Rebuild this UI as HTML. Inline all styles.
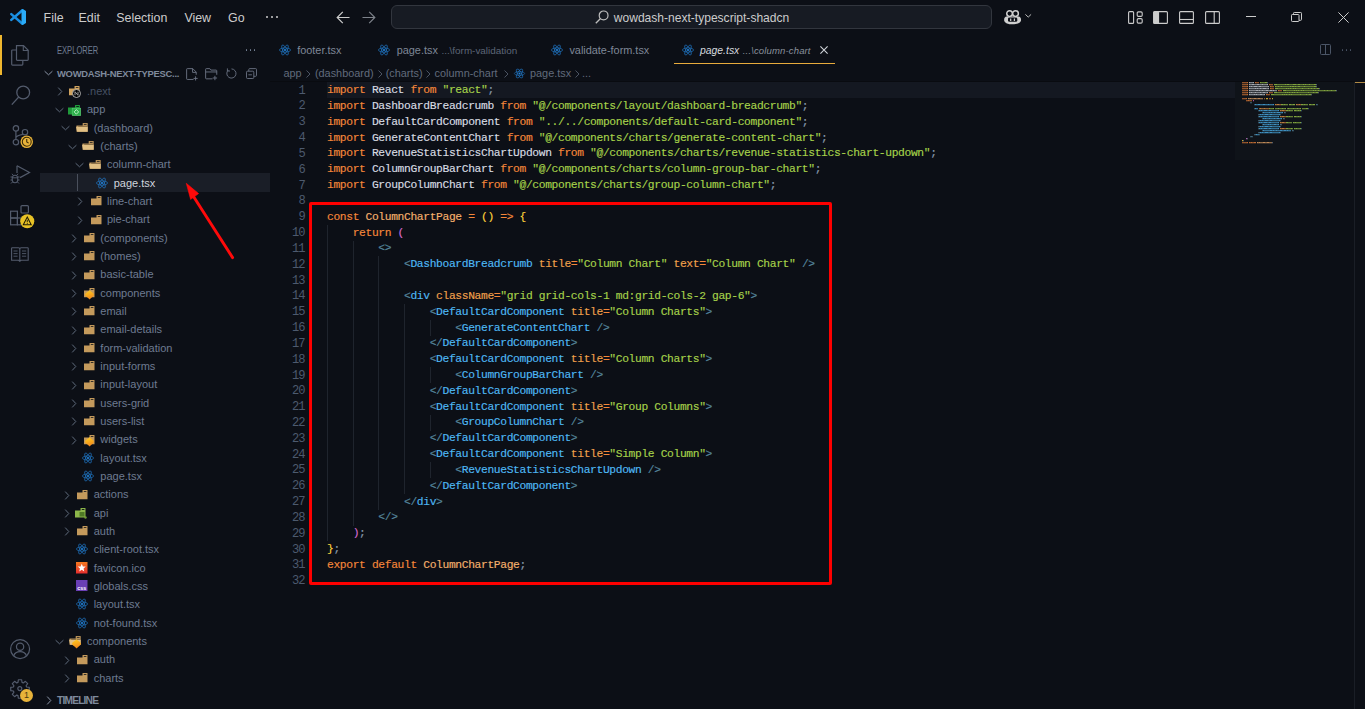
<!DOCTYPE html>
<html><head><meta charset="utf-8"><style>
*{box-sizing:border-box;margin:0;padding:0}
html,body{width:1365px;height:709px;overflow:hidden;background:#0c0f16;font-family:"Liberation Sans",sans-serif}
.a{position:absolute}
svg.a{overflow:visible}
.menu{position:absolute;top:11px;font-size:12.4px;color:#cccccc;line-height:14px}
.tx{font-size:11px;line-height:18.333px;white-space:pre}
.tab{position:absolute;top:43px;font-size:10.9px;color:#7f8796;line-height:14px;white-space:pre}
.crumb{position:absolute;top:66px;font-size:10.9px;color:#6b7588;line-height:14px;white-space:pre}
.code{left:327.0px;top:83.10000000000001px;font-family:"Liberation Mono",monospace;font-size:11.3px;letter-spacing:-0.363px;-webkit-text-stroke:0.15px;line-height:15.8333px;white-space:pre;color:#c9d1d9}
.ln{left:280px;width:24.8px;top:83.60000000000001px;font-family:"Liberation Mono",monospace;font-size:12.1px;letter-spacing:-0.843px;line-height:15.8333px;white-space:pre;color:#4d5a6e;text-align:right}
</style></head><body>
<svg class="a" style="left:9.9px;top:9px" width="16" height="16" viewBox="0 0 16 16"><path d="M12.4 1.2L1.3 10.9" stroke="#1c93e6" stroke-width="2.5" stroke-linecap="round"/><path d="M1.3 5.1L12.4 14.8" stroke="#1a8ddf" stroke-width="2.5" stroke-linecap="round"/><path d="M11.5 0.9L12.7 0.05L16 1.9V14.1L12.7 15.95L11.5 15.1Z" fill="#2aabf7"/></svg>
<div class="menu" style="left:43.6px">File</div>
<div class="menu" style="left:78.5px">Edit</div>
<div class="menu" style="left:116.3px">Selection</div>
<div class="menu" style="left:184.4px">View</div>
<div class="menu" style="left:228px">Go</div>
<div class="a" style="left:265.50px;top:16px;width:2.2px;height:2.2px;border-radius:50%;background:#cccccc"></div>
<div class="a" style="left:270.90px;top:16px;width:2.2px;height:2.2px;border-radius:50%;background:#cccccc"></div>
<div class="a" style="left:276.30px;top:16px;width:2.2px;height:2.2px;border-radius:50%;background:#cccccc"></div>
<svg class="a" style="left:335.5px;top:10.5px" width="14" height="13" viewBox="0 0 14 13"><path d="M13.5 6.5H1.2M6.8 0.8L1.2 6.5L6.8 12.2" fill="none" stroke="#cccccc" stroke-width="1.2"/></svg>
<svg class="a" style="left:361.8px;top:10.5px" width="14" height="13" viewBox="0 0 14 13"><path d="M0.5 6.5H12.8M7.2 0.8L12.8 6.5L7.2 12.2" fill="none" stroke="#7d828a" stroke-width="1.2"/></svg>
<div class="a" style="left:390.5px;top:5px;width:601.5px;height:24px;border:1px solid #32363e;border-radius:6px;background:#171b23"></div>
<svg class="a" style="left:595px;top:10px" width="14" height="14" viewBox="0 0 14 14"><circle cx="8.6" cy="5.4" r="4.4" fill="none" stroke="#bdbdbd" stroke-width="1.2"/><path d="M5.5 8.5L0.8 13.2" stroke="#bdbdbd" stroke-width="1.3"/></svg>
<div class="a" style="left:613.8px;top:11.4px;font-size:12.05px;color:#cccccc;line-height:14px;white-space:pre">wowdash-next-typescript-shadcn</div>
<svg class="a" style="left:1004px;top:9.7px" width="17.2" height="14.4" viewBox="0 0 17.2 14.4"><path d="M2.2 6.4C0.6 7 0 8.4 0.2 10.2C0.6 13.2 4 14.3 8.6 14.3C13.2 14.3 16.6 13.2 17 10.2C17.2 8.4 16.6 7 15 6.4Z" fill="#cfcfcf"/><rect x="4" y="7.4" width="9.3" height="4.4" rx="1.4" fill="#0c0f16"/><rect x="6.1" y="8.5" width="1.2" height="2.5" fill="#cfcfcf"/><rect x="9.8" y="8.5" width="1.2" height="2.5" fill="#cfcfcf"/><circle cx="5.6" cy="3.6" r="2.85" fill="#0c0f16" stroke="#cfcfcf" stroke-width="1.5"/><circle cx="11.5" cy="3.6" r="2.85" fill="#0c0f16" stroke="#cfcfcf" stroke-width="1.5"/></svg>
<svg class="a" style="left:1024.5px;top:14.4px" width="6.5" height="3.6" viewBox="0 0 6.5 3.6"><path d="M0.4 0.4L3.25 3.1L6.1 0.4" fill="none" stroke="#bbbbbb" stroke-width="1"/></svg>
<svg class="a" style="left:1128px;top:10.8px" width="15" height="13" viewBox="0 0 15 13"><rect x="0.6" y="0.6" width="5" height="11.8" rx="1" fill="none" stroke="#cccccc" stroke-width="1.1"/><rect x="9.2" y="0.9" width="5" height="4.5" rx="1.2" fill="none" stroke="#cccccc" stroke-width="1.1"/><rect x="9.2" y="7.6" width="5" height="4.5" rx="1.2" fill="none" stroke="#cccccc" stroke-width="1.1"/></svg>
<svg class="a" style="left:1153.2px;top:10.8px" width="15" height="13" viewBox="0 0 15 13"><rect x="0.6" y="0.6" width="13.8" height="11.8" rx="1" fill="none" stroke="#cccccc" stroke-width="1.1"/><rect x="0.6" y="0.6" width="5.5" height="11.8" fill="#cccccc"/></svg>
<svg class="a" style="left:1179.2px;top:10.8px" width="15" height="13" viewBox="0 0 15 13"><rect x="0.6" y="0.6" width="13.8" height="11.8" rx="1" fill="none" stroke="#cccccc" stroke-width="1.1"/><path d="M0.6 8.5H14.4" stroke="#cccccc" stroke-width="1.1"/></svg>
<svg class="a" style="left:1205.3px;top:10.8px" width="15" height="13" viewBox="0 0 15 13"><rect x="0.6" y="0.6" width="13.8" height="11.8" rx="1" fill="none" stroke="#cccccc" stroke-width="1.1"/><path d="M9.2 0.6V12.4" stroke="#cccccc" stroke-width="1.1"/></svg>
<div class="a" style="left:1245.6px;top:16px;width:10.4px;height:1px;background:#cccccc"></div>
<svg class="a" style="left:1291.4px;top:12.2px" width="11" height="10" viewBox="0 0 11 10"><rect x="0.5" y="2.5" width="7.5" height="7" rx="0.8" fill="none" stroke="#cccccc" stroke-width="1"/><path d="M2.5 2.5V1.3Q2.5 0.5 3.3 0.5H9.7Q10.5 0.5 10.5 1.3V7.5Q10.5 8.3 9.7 8.3H8" fill="none" stroke="#cccccc" stroke-width="1"/></svg>
<svg class="a" style="left:1337.6px;top:11.7px" width="11" height="11" viewBox="0 0 11 11"><path d="M0.4 0.4L10.6 10.6M10.6 0.4L0.4 10.6" stroke="#cccccc" stroke-width="1"/></svg>
<div class="a" style="left:0;top:35px;width:2px;height:40px;background:#f0b72f"></div>
<svg class="a" style="left:10.5px;top:44.5px" width="18" height="21" viewBox="0 0 18 21"><path d="M5.5 0.6H12.5L17.2 5.3V14.5Q17.2 15.3 16.4 15.3H6.3Q5.5 15.3 5.5 14.5Z" fill="none" stroke="#535b6c" stroke-width="1.2"/><path d="M12.3 0.6V5.5H17.2" fill="none" stroke="#535b6c" stroke-width="1.1"/><path d="M5.5 5H1.5Q0.7 5 0.7 5.8V19.3Q0.7 20.1 1.5 20.1H11Q11.8 20.1 11.8 19.3V15.3" fill="none" stroke="#535b6c" stroke-width="1.2"/></svg>
<svg class="a" style="left:10.5px;top:84.5px" width="20" height="21" viewBox="0 0 20 21"><circle cx="12.2" cy="7.5" r="6.4" fill="none" stroke="#535b6c" stroke-width="1.3"/><path d="M7.6 12.1L0.8 19.6" stroke="#535b6c" stroke-width="1.4"/></svg>
<svg class="a" style="left:11.5px;top:124.5px" width="22" height="24" viewBox="0 0 22 24"><circle cx="3.9" cy="3.4" r="2.7" fill="none" stroke="#535b6c" stroke-width="1.2"/><circle cx="3.9" cy="17.2" r="2.7" fill="none" stroke="#535b6c" stroke-width="1.2"/><circle cx="13" cy="7.2" r="2.7" fill="none" stroke="#535b6c" stroke-width="1.2"/><path d="M3.9 6.1V14.5M3.9 12.6Q4.6 10.6 11 9.4" fill="none" stroke="#535b6c" stroke-width="1.2"/></svg>
<svg class="a" style="left:20px;top:135px" width="13.5" height="13.5" viewBox="0 0 14 14"><circle cx="7" cy="7" r="6.5" fill="#e8b33a"/><circle cx="7" cy="7" r="4.6" fill="none" stroke="#3a2a08" stroke-width="1.1"/><path d="M7 4.2V7.2L9 8.4" fill="none" stroke="#3a2a08" stroke-width="1.1"/></svg>
<svg class="a" style="left:9.5px;top:165px" width="21" height="20" viewBox="0 0 21 20"><path d="M7 0.8L19.5 7.5L10 12.6" fill="none" stroke="#535b6c" stroke-width="1.2"/><path d="M7 0.8V8" fill="none" stroke="#535b6c" stroke-width="1.2"/><ellipse cx="5" cy="14" rx="2.8" ry="3.8" fill="none" stroke="#535b6c" stroke-width="1.1"/><path d="M0.5 12H2.2M7.8 12H9.5M0.5 15H2.2M7.8 15H9.5M1 18.5L2.5 17M9 18.5L7.5 17M3 10L2 8.8M7 10L8 8.8M2.2 12.8H7.8" stroke="#535b6c" stroke-width="1"/></svg>
<svg class="a" style="left:10px;top:204.5px" width="20" height="21" viewBox="0 0 20 21"><rect x="0.6" y="6.2" width="6.8" height="6.8" fill="none" stroke="#535b6c" stroke-width="1.2"/><rect x="0.6" y="13" width="6.8" height="6.8" fill="none" stroke="#535b6c" stroke-width="1.2"/><rect x="7.4" y="13" width="6.8" height="6.8" fill="none" stroke="#535b6c" stroke-width="1.2"/><rect x="11" y="0.6" width="7.4" height="7.4" rx="1" fill="none" stroke="#535b6c" stroke-width="1.2"/></svg>
<svg class="a" style="left:19.5px;top:214px" width="14.5" height="14.5" viewBox="0 0 14 14"><circle cx="7" cy="7" r="6.8" fill="#e8c226"/><path d="M7 3L10.8 10.3H3.2Z" fill="none" stroke="#1d1a05" stroke-width="1"/><path d="M7 5.6V8" stroke="#1d1a05" stroke-width="0.9"/><circle cx="7" cy="9.2" r="0.5" fill="#1d1a05"/></svg>
<svg class="a" style="left:11.3px;top:246.6px" width="18" height="15" viewBox="0 0 18 15"><path d="M0.6 0.8H7.5Q8.8 0.8 8.8 2.2V14.3M17.2 0.8H10.1Q8.8 0.8 8.8 2.2M0.6 0.8V13.3H7.6L8.8 14.3L10 13.3H17.2V0.8" fill="none" stroke="#535b6c" stroke-width="1.1"/><path d="M2.5 4H6.6M2.5 6.6H6.6M2.5 9.2H6.6M11 4H15.2M11 6.6H15.2M11 9.2H15.2" stroke="#535b6c" stroke-width="0.9"/></svg>
<svg class="a" style="left:10px;top:638.8px" width="20.2" height="20.2" viewBox="0 0 20 20"><circle cx="10" cy="10" r="9.4" fill="none" stroke="#535b6c" stroke-width="1.2"/><circle cx="10" cy="7.6" r="3.6" fill="none" stroke="#535b6c" stroke-width="1.2"/><path d="M3.6 16.8Q5 12.6 10 12.6Q15 12.6 16.4 16.8" fill="none" stroke="#535b6c" stroke-width="1.2"/></svg>
<svg class="a" style="left:10px;top:679px" width="20" height="20" viewBox="0 0 20 20"><path d="M7.98 3.40L8.37 0.74L11.63 0.74L12.02 3.40L13.24 3.91L15.39 2.30L17.70 4.61L16.09 6.76L16.60 7.98L19.26 8.37L19.26 11.63L16.60 12.02L16.09 13.24L17.70 15.39L15.39 17.70L13.24 16.09L12.02 16.60L11.63 19.26L8.37 19.26L7.98 16.60L6.76 16.09L4.61 17.70L2.30 15.39L3.91 13.24L3.40 12.02L0.74 11.63L0.74 8.37L3.40 7.98L3.91 6.76L2.30 4.61L4.61 2.30L6.76 3.91Z" fill="none" stroke="#535b6c" stroke-width="1.2" stroke-linejoin="round"/><circle cx="9.8" cy="9.6" r="2" fill="none" stroke="#535b6c" stroke-width="1.2"/></svg>
<div class="a" style="left:19.9px;top:688.8px;width:13px;height:13px;border-radius:50%;background:#e8b33a;color:#4a3a10;font-size:9px;line-height:13px;text-align:center">1</div>
<div class="a" style="left:57px;top:45.2px;font-size:10.2px;color:#6e7b91;line-height:12px;transform-origin:0 0;transform:scaleX(0.745)">EXPLORER</div>
<div class="a" style="left:245.70px;top:49px;width:1.6px;height:1.6px;border-radius:50%;background:#7a8699"></div>
<div class="a" style="left:249.70px;top:49px;width:1.6px;height:1.6px;border-radius:50%;background:#7a8699"></div>
<div class="a" style="left:253.70px;top:49px;width:1.6px;height:1.6px;border-radius:50%;background:#7a8699"></div>
<svg class="a" style="left:185.6px;top:67.5px" width="12.5" height="12.5" viewBox="0 0 12 12"><path d="M7.2 11H1.3Q0.6 11 0.6 10.3V1.3Q0.6 0.6 1.3 0.6H6.5L9.8 3.9V6.5" fill="none" stroke="#6b7383" stroke-width="0.9"/><path d="M6.3 0.6V4.2H9.8M9.2 8V12M7.2 10H11.2" fill="none" stroke="#6b7383" stroke-width="0.9"/></svg>
<svg class="a" style="left:204.7px;top:67.5px" width="12.5" height="12.5" viewBox="0 0 12 12"><path d="M7.2 10.4H1.3Q0.6 10.4 0.6 9.7V1.3Q0.6 0.6 1.3 0.6H4.6L5.6 2H10.6Q11.3 2 11.3 2.7V6.5M0.6 3.8H11.3" fill="none" stroke="#6b7383" stroke-width="0.9"/><path d="M9.5 7.5V11.7M7.4 9.6H11.6" fill="none" stroke="#6b7383" stroke-width="0.9"/></svg>
<svg class="a" style="left:225.5px;top:68px" width="11" height="11" viewBox="0 0 11 11"><path d="M2.2 2.2A4.6 4.6 0 1 0 5.5 0.9" fill="none" stroke="#6b7383" stroke-width="0.9"/><path d="M1.4 0.4V3H4" fill="none" stroke="#6b7383" stroke-width="0.9"/></svg>
<svg class="a" style="left:245.7px;top:68px" width="11" height="11" viewBox="0 0 11 11"><rect x="0.5" y="3.2" width="7.3" height="7.3" rx="1" fill="none" stroke="#6b7383" stroke-width="0.9"/><path d="M2.8 3.2V1.5Q2.8 0.6 3.7 0.6H9.6Q10.5 0.6 10.5 1.5V7.4Q10.5 8.3 9.6 8.3H7.8M2.4 6.8H5.9" fill="none" stroke="#6b7383" stroke-width="0.9"/></svg>
<svg class="a" style="left:43.80px;top:69.77px" width="9" height="6" viewBox="0 0 9 6"><path d="M0.6 1.2L4.5 4.8L8.4 1.2" fill="none" stroke="#8a94a6" stroke-width="1"/></svg>
<div class="a tx" style="left:57px;top:64.50px;font-weight:bold;font-size:9.4px;letter-spacing:-0.25px;color:#7f8a9c">WOWDASH-NEXT-TYPESC...</div>
<svg class="a" style="left:57.20px;top:87.30px" width="6" height="9" viewBox="0 0 6 9"><path d="M1.2 0.6L4.8 4.5L1.2 8.4" fill="none" stroke="#5f6b7c" stroke-width="1"/></svg>
<svg class="a" style="left:68.80px;top:86.20px" width="11" height="10" viewBox="0 0 11 10"><path d="M0 2.6H5.5V0.3Q5.5 0 5.8 0H10.2Q10.5 0 10.5 .3V9.2H0Z" fill="#d1a45f"/><rect x="6.8" y="1" width="2.6" height="0.9" fill="#0c0f16" opacity="0.85"/></svg>
<svg class="a" style="left:72.30px;top:88.60px" width="9" height="9" viewBox="0 0 9 9"><circle cx="4.5" cy="4.5" r="4" fill="#000" stroke="#bbb" stroke-width="0.9"/><path d="M3 6.3V2.7L6 6.3V2.7" stroke="#aaa" stroke-width="0.9" fill="none"/></svg>
<div class="a tx" style="left:87.00px;top:81.83px;color:#455062">.next</div>
<svg class="a" style="left:54.50px;top:107.13px" width="9" height="6" viewBox="0 0 9 6"><path d="M0.6 1.2L4.5 4.8L8.4 1.2" fill="none" stroke="#5f6b7c" stroke-width="1"/></svg>
<svg class="a" style="left:67.80px;top:104.53px" width="13" height="11" viewBox="0 0 13 11"><path d="M0 2.4H7V0.3Q7 0 7.3 0H11.6Q11.9 0 11.9 .3V9.6H0Z" fill="#1f9a3a"/><rect x="8.3" y="1" width="2.6" height="0.9" fill="#0c0f16"/><rect x="4.2" y="3.2" width="8.5" height="7.4" fill="#2bb04a" stroke="#5fcf78" stroke-width="0.6"/><path d="M8.4 4.6L10.6 6.9L8.4 9.2L6.2 6.9Z" fill="none" stroke="#c8f5d0" stroke-width="0.9"/></svg>
<div class="a tx" style="left:87.00px;top:100.17px;color:#6e7b91">app</div>
<svg class="a" style="left:61.17px;top:125.47px" width="9" height="6" viewBox="0 0 9 6"><path d="M0.6 1.2L4.5 4.8L8.4 1.2" fill="none" stroke="#5f6b7c" stroke-width="1"/></svg>
<svg class="a" style="left:75.67px;top:123.07px" width="12" height="9.6" viewBox="0 0 12.6 10" preserveAspectRatio="none"><path d="M0.5 2.6H7V0.3Q7 0 7.3 0H12Q12.3 0 12.3 .3V9H0.5Z" fill="#b8925a"/><rect x="8.3" y="1" width="2.8" height="0.9" fill="#0c0f16" opacity="0.85"/><path d="M0 3.8H12.3V9H1.2Z" fill="#e2c084"/><rect x="2.3" y="3.1" width="9.6" height="0.8" fill="#6e5a3a" opacity="0.8"/></svg>
<div class="a tx" style="left:93.67px;top:118.50px;color:#6e7b91">(dashboard)</div>
<svg class="a" style="left:67.83px;top:143.80px" width="9" height="6" viewBox="0 0 9 6"><path d="M0.6 1.2L4.5 4.8L8.4 1.2" fill="none" stroke="#5f6b7c" stroke-width="1"/></svg>
<svg class="a" style="left:82.33px;top:141.40px" width="12" height="9.6" viewBox="0 0 12.6 10" preserveAspectRatio="none"><path d="M0.5 2.6H7V0.3Q7 0 7.3 0H12Q12.3 0 12.3 .3V9H0.5Z" fill="#b8925a"/><rect x="8.3" y="1" width="2.8" height="0.9" fill="#0c0f16" opacity="0.85"/><path d="M0 3.8H12.3V9H1.2Z" fill="#e2c084"/><rect x="2.3" y="3.1" width="9.6" height="0.8" fill="#6e5a3a" opacity="0.8"/></svg>
<div class="a tx" style="left:100.33px;top:136.83px;color:#6e7b91">(charts)</div>
<svg class="a" style="left:74.50px;top:162.13px" width="9" height="6" viewBox="0 0 9 6"><path d="M0.6 1.2L4.5 4.8L8.4 1.2" fill="none" stroke="#5f6b7c" stroke-width="1"/></svg>
<svg class="a" style="left:89.00px;top:159.73px" width="12" height="9.6" viewBox="0 0 12.6 10" preserveAspectRatio="none"><path d="M0.5 2.6H7V0.3Q7 0 7.3 0H12Q12.3 0 12.3 .3V9H0.5Z" fill="#b8925a"/><rect x="8.3" y="1" width="2.8" height="0.9" fill="#0c0f16" opacity="0.85"/><path d="M0 3.8H12.3V9H1.2Z" fill="#e2c084"/><rect x="2.3" y="3.1" width="9.6" height="0.8" fill="#6e5a3a" opacity="0.8"/></svg>
<div class="a tx" style="left:107.00px;top:155.17px;color:#6e7b91">column-chart</div>
<div class="a" style="left:40px;top:173.20px;width:229.5px;height:19.3px;background:#1a1e27"></div>
<div class="a" style="left:77px;top:173.90px;width:1px;height:17.13px;background:#4a505c"></div>
<svg class="a" style="left:95.67px;top:176.67px" width="12.0" height="12.0" viewBox="-12 -12 24 24"><g fill="none" stroke="#2284dc" stroke-width="1.15"><ellipse rx="11.2" ry="4.2"/><ellipse rx="11.2" ry="4.2" transform="rotate(60)"/><ellipse rx="11.2" ry="4.2" transform="rotate(120)"/></g><circle r="2.2" fill="#2284dc"/></svg>
<div class="a tx" style="left:113.67px;top:173.50px;color:#d0d5dd">page.tsx</div>
<svg class="a" style="left:77.20px;top:197.30px" width="6" height="9" viewBox="0 0 6 9"><path d="M1.2 0.6L4.8 4.5L1.2 8.4" fill="none" stroke="#5f6b7c" stroke-width="1"/></svg>
<svg class="a" style="left:90.60px;top:196.20px" width="11" height="10" viewBox="0 0 11 10"><path d="M0 2.6H5.5V0.3Q5.5 0 5.8 0H10.2Q10.5 0 10.5 .3V9.2H0Z" fill="#c49a5c"/><rect x="6.8" y="1" width="2.6" height="0.9" fill="#0c0f16" opacity="0.85"/></svg>
<div class="a tx" style="left:107.00px;top:191.83px;color:#6e7b91">line-chart</div>
<svg class="a" style="left:77.20px;top:215.63px" width="6" height="9" viewBox="0 0 6 9"><path d="M1.2 0.6L4.8 4.5L1.2 8.4" fill="none" stroke="#5f6b7c" stroke-width="1"/></svg>
<svg class="a" style="left:90.60px;top:214.53px" width="11" height="10" viewBox="0 0 11 10"><path d="M0 2.6H5.5V0.3Q5.5 0 5.8 0H10.2Q10.5 0 10.5 .3V9.2H0Z" fill="#c49a5c"/><rect x="6.8" y="1" width="2.6" height="0.9" fill="#0c0f16" opacity="0.85"/></svg>
<div class="a tx" style="left:107.00px;top:210.17px;color:#6e7b91">pie-chart</div>
<svg class="a" style="left:70.53px;top:233.97px" width="6" height="9" viewBox="0 0 6 9"><path d="M1.2 0.6L4.8 4.5L1.2 8.4" fill="none" stroke="#5f6b7c" stroke-width="1"/></svg>
<svg class="a" style="left:83.93px;top:232.87px" width="11" height="10" viewBox="0 0 11 10"><path d="M0 2.6H5.5V0.3Q5.5 0 5.8 0H10.2Q10.5 0 10.5 .3V9.2H0Z" fill="#c49a5c"/><rect x="6.8" y="1" width="2.6" height="0.9" fill="#0c0f16" opacity="0.85"/></svg>
<div class="a tx" style="left:100.33px;top:228.50px;color:#6e7b91">(components)</div>
<svg class="a" style="left:70.53px;top:252.30px" width="6" height="9" viewBox="0 0 6 9"><path d="M1.2 0.6L4.8 4.5L1.2 8.4" fill="none" stroke="#5f6b7c" stroke-width="1"/></svg>
<svg class="a" style="left:83.93px;top:251.20px" width="11" height="10" viewBox="0 0 11 10"><path d="M0 2.6H5.5V0.3Q5.5 0 5.8 0H10.2Q10.5 0 10.5 .3V9.2H0Z" fill="#c49a5c"/><rect x="6.8" y="1" width="2.6" height="0.9" fill="#0c0f16" opacity="0.85"/></svg>
<div class="a tx" style="left:100.33px;top:246.83px;color:#6e7b91">(homes)</div>
<svg class="a" style="left:70.53px;top:270.63px" width="6" height="9" viewBox="0 0 6 9"><path d="M1.2 0.6L4.8 4.5L1.2 8.4" fill="none" stroke="#5f6b7c" stroke-width="1"/></svg>
<svg class="a" style="left:83.93px;top:269.53px" width="11" height="10" viewBox="0 0 11 10"><path d="M0 2.6H5.5V0.3Q5.5 0 5.8 0H10.2Q10.5 0 10.5 .3V9.2H0Z" fill="#c49a5c"/><rect x="6.8" y="1" width="2.6" height="0.9" fill="#0c0f16" opacity="0.85"/></svg>
<div class="a tx" style="left:100.33px;top:265.17px;color:#6e7b91">basic-table</div>
<svg class="a" style="left:70.53px;top:288.97px" width="6" height="9" viewBox="0 0 6 9"><path d="M1.2 0.6L4.8 4.5L1.2 8.4" fill="none" stroke="#5f6b7c" stroke-width="1"/></svg>
<svg class="a" style="left:83.93px;top:287.87px" width="11" height="10" viewBox="0 0 11 10"><path d="M0 2.6H5.5V0.3Q5.5 0 5.8 0H10.2Q10.5 0 10.5 .3V9.2H0Z" fill="#c49a5c"/><rect x="6.8" y="1" width="2.6" height="0.9" fill="#0c0f16" opacity="0.85"/></svg>
<svg class="a" style="left:85.23px;top:290.27px" width="9" height="9.5" viewBox="0 0 9 9.5"><defs><linearGradient id="cg" x1="0" y1="0" x2="0.3" y2="1"><stop offset="0" stop-color="#ffd21f"/><stop offset="1" stop-color="#f28a1c"/></linearGradient></defs><path d="M4.6 0.3C6 2 8.9 3 8.9 4.8C8.9 6.6 6 7.6 4.6 9.4C3.2 7.6 0.1 6.6 0.1 4.8C0.1 3 3.2 2 4.6 0.3Z" fill="url(#cg)"/></svg>
<div class="a tx" style="left:100.33px;top:283.50px;color:#6e7b91">components</div>
<svg class="a" style="left:70.53px;top:307.30px" width="6" height="9" viewBox="0 0 6 9"><path d="M1.2 0.6L4.8 4.5L1.2 8.4" fill="none" stroke="#5f6b7c" stroke-width="1"/></svg>
<svg class="a" style="left:83.93px;top:306.20px" width="11" height="10" viewBox="0 0 11 10"><path d="M0 2.6H5.5V0.3Q5.5 0 5.8 0H10.2Q10.5 0 10.5 .3V9.2H0Z" fill="#c49a5c"/><rect x="6.8" y="1" width="2.6" height="0.9" fill="#0c0f16" opacity="0.85"/></svg>
<div class="a tx" style="left:100.33px;top:301.83px;color:#6e7b91">email</div>
<svg class="a" style="left:70.53px;top:325.63px" width="6" height="9" viewBox="0 0 6 9"><path d="M1.2 0.6L4.8 4.5L1.2 8.4" fill="none" stroke="#5f6b7c" stroke-width="1"/></svg>
<svg class="a" style="left:83.93px;top:324.53px" width="11" height="10" viewBox="0 0 11 10"><path d="M0 2.6H5.5V0.3Q5.5 0 5.8 0H10.2Q10.5 0 10.5 .3V9.2H0Z" fill="#c49a5c"/><rect x="6.8" y="1" width="2.6" height="0.9" fill="#0c0f16" opacity="0.85"/></svg>
<div class="a tx" style="left:100.33px;top:320.17px;color:#6e7b91">email-details</div>
<svg class="a" style="left:70.53px;top:343.97px" width="6" height="9" viewBox="0 0 6 9"><path d="M1.2 0.6L4.8 4.5L1.2 8.4" fill="none" stroke="#5f6b7c" stroke-width="1"/></svg>
<svg class="a" style="left:83.93px;top:342.87px" width="11" height="10" viewBox="0 0 11 10"><path d="M0 2.6H5.5V0.3Q5.5 0 5.8 0H10.2Q10.5 0 10.5 .3V9.2H0Z" fill="#c49a5c"/><rect x="6.8" y="1" width="2.6" height="0.9" fill="#0c0f16" opacity="0.85"/></svg>
<div class="a tx" style="left:100.33px;top:338.50px;color:#6e7b91">form-validation</div>
<svg class="a" style="left:70.53px;top:362.30px" width="6" height="9" viewBox="0 0 6 9"><path d="M1.2 0.6L4.8 4.5L1.2 8.4" fill="none" stroke="#5f6b7c" stroke-width="1"/></svg>
<svg class="a" style="left:83.93px;top:361.20px" width="11" height="10" viewBox="0 0 11 10"><path d="M0 2.6H5.5V0.3Q5.5 0 5.8 0H10.2Q10.5 0 10.5 .3V9.2H0Z" fill="#c49a5c"/><rect x="6.8" y="1" width="2.6" height="0.9" fill="#0c0f16" opacity="0.85"/></svg>
<div class="a tx" style="left:100.33px;top:356.83px;color:#6e7b91">input-forms</div>
<svg class="a" style="left:70.53px;top:380.63px" width="6" height="9" viewBox="0 0 6 9"><path d="M1.2 0.6L4.8 4.5L1.2 8.4" fill="none" stroke="#5f6b7c" stroke-width="1"/></svg>
<svg class="a" style="left:83.93px;top:379.53px" width="11" height="10" viewBox="0 0 11 10"><path d="M0 2.6H5.5V0.3Q5.5 0 5.8 0H10.2Q10.5 0 10.5 .3V9.2H0Z" fill="#c49a5c"/><rect x="6.8" y="1" width="2.6" height="0.9" fill="#0c0f16" opacity="0.85"/></svg>
<div class="a tx" style="left:100.33px;top:375.17px;color:#6e7b91">input-layout</div>
<svg class="a" style="left:70.53px;top:398.97px" width="6" height="9" viewBox="0 0 6 9"><path d="M1.2 0.6L4.8 4.5L1.2 8.4" fill="none" stroke="#5f6b7c" stroke-width="1"/></svg>
<svg class="a" style="left:83.93px;top:397.87px" width="11" height="10" viewBox="0 0 11 10"><path d="M0 2.6H5.5V0.3Q5.5 0 5.8 0H10.2Q10.5 0 10.5 .3V9.2H0Z" fill="#c49a5c"/><rect x="6.8" y="1" width="2.6" height="0.9" fill="#0c0f16" opacity="0.85"/></svg>
<div class="a tx" style="left:100.33px;top:393.50px;color:#6e7b91">users-grid</div>
<svg class="a" style="left:70.53px;top:417.30px" width="6" height="9" viewBox="0 0 6 9"><path d="M1.2 0.6L4.8 4.5L1.2 8.4" fill="none" stroke="#5f6b7c" stroke-width="1"/></svg>
<svg class="a" style="left:83.93px;top:416.20px" width="11" height="10" viewBox="0 0 11 10"><path d="M0 2.6H5.5V0.3Q5.5 0 5.8 0H10.2Q10.5 0 10.5 .3V9.2H0Z" fill="#c49a5c"/><rect x="6.8" y="1" width="2.6" height="0.9" fill="#0c0f16" opacity="0.85"/></svg>
<div class="a tx" style="left:100.33px;top:411.83px;color:#6e7b91">users-list</div>
<svg class="a" style="left:70.53px;top:435.63px" width="6" height="9" viewBox="0 0 6 9"><path d="M1.2 0.6L4.8 4.5L1.2 8.4" fill="none" stroke="#5f6b7c" stroke-width="1"/></svg>
<svg class="a" style="left:83.93px;top:434.53px" width="11" height="10" viewBox="0 0 11 10"><path d="M0 2.6H5.5V0.3Q5.5 0 5.8 0H10.2Q10.5 0 10.5 .3V9.2H0Z" fill="#c49a5c"/><rect x="6.8" y="1" width="2.6" height="0.9" fill="#0c0f16" opacity="0.85"/></svg>
<svg class="a" style="left:85.23px;top:436.93px" width="9" height="9.5" viewBox="0 0 9 9.5"><defs><linearGradient id="cg" x1="0" y1="0" x2="0.3" y2="1"><stop offset="0" stop-color="#ffd21f"/><stop offset="1" stop-color="#f28a1c"/></linearGradient></defs><path d="M4.6 0.3C6 2 8.9 3 8.9 4.8C8.9 6.6 6 7.6 4.6 9.4C3.2 7.6 0.1 6.6 0.1 4.8C0.1 3 3.2 2 4.6 0.3Z" fill="url(#cg)"/></svg>
<div class="a tx" style="left:100.33px;top:430.17px;color:#6e7b91">widgets</div>
<svg class="a" style="left:82.33px;top:451.67px" width="12.0" height="12.0" viewBox="-12 -12 24 24"><g fill="none" stroke="#2284dc" stroke-width="1.15"><ellipse rx="11.2" ry="4.2"/><ellipse rx="11.2" ry="4.2" transform="rotate(60)"/><ellipse rx="11.2" ry="4.2" transform="rotate(120)"/></g><circle r="2.2" fill="#2284dc"/></svg>
<div class="a tx" style="left:100.33px;top:448.50px;color:#6e7b91">layout.tsx</div>
<svg class="a" style="left:82.33px;top:470.00px" width="12.0" height="12.0" viewBox="-12 -12 24 24"><g fill="none" stroke="#2284dc" stroke-width="1.15"><ellipse rx="11.2" ry="4.2"/><ellipse rx="11.2" ry="4.2" transform="rotate(60)"/><ellipse rx="11.2" ry="4.2" transform="rotate(120)"/></g><circle r="2.2" fill="#2284dc"/></svg>
<div class="a tx" style="left:100.33px;top:466.83px;color:#6e7b91">page.tsx</div>
<svg class="a" style="left:63.87px;top:490.63px" width="6" height="9" viewBox="0 0 6 9"><path d="M1.2 0.6L4.8 4.5L1.2 8.4" fill="none" stroke="#5f6b7c" stroke-width="1"/></svg>
<svg class="a" style="left:77.27px;top:489.53px" width="11" height="10" viewBox="0 0 11 10"><path d="M0 2.6H5.5V0.3Q5.5 0 5.8 0H10.2Q10.5 0 10.5 .3V9.2H0Z" fill="#c49a5c"/><rect x="6.8" y="1" width="2.6" height="0.9" fill="#0c0f16" opacity="0.85"/></svg>
<div class="a tx" style="left:93.67px;top:485.17px;color:#6e7b91">actions</div>
<svg class="a" style="left:63.87px;top:508.97px" width="6" height="9" viewBox="0 0 6 9"><path d="M1.2 0.6L4.8 4.5L1.2 8.4" fill="none" stroke="#5f6b7c" stroke-width="1"/></svg>
<svg class="a" style="left:75.47px;top:507.57px" width="12" height="11" viewBox="0 0 12 11"><path d="M0 2.6H5.5V0.3Q5.5 0 5.8 0H10.2Q10.5 0 10.5 .3V9.6H0Z" fill="#8cb64a"/><rect x="6.8" y="1" width="2.6" height="0.9" fill="#0c0f16"/><rect x="4.5" y="4" width="5" height="4.5" fill="#4f7a25"/><circle cx="10.5" cy="9.5" r="1.2" fill="#6f9a35"/></svg>
<div class="a tx" style="left:93.67px;top:503.50px;color:#6e7b91">api</div>
<svg class="a" style="left:63.87px;top:527.30px" width="6" height="9" viewBox="0 0 6 9"><path d="M1.2 0.6L4.8 4.5L1.2 8.4" fill="none" stroke="#5f6b7c" stroke-width="1"/></svg>
<svg class="a" style="left:77.27px;top:526.20px" width="11" height="10" viewBox="0 0 11 10"><path d="M0 2.6H5.5V0.3Q5.5 0 5.8 0H10.2Q10.5 0 10.5 .3V9.2H0Z" fill="#c49a5c"/><rect x="6.8" y="1" width="2.6" height="0.9" fill="#0c0f16" opacity="0.85"/></svg>
<div class="a tx" style="left:93.67px;top:521.83px;color:#6e7b91">auth</div>
<svg class="a" style="left:75.67px;top:543.33px" width="12.0" height="12.0" viewBox="-12 -12 24 24"><g fill="none" stroke="#2284dc" stroke-width="1.15"><ellipse rx="11.2" ry="4.2"/><ellipse rx="11.2" ry="4.2" transform="rotate(60)"/><ellipse rx="11.2" ry="4.2" transform="rotate(120)"/></g><circle r="2.2" fill="#2284dc"/></svg>
<div class="a tx" style="left:93.67px;top:540.17px;color:#6e7b91">client-root.tsx</div>
<svg class="a" style="left:75.97px;top:561.77px" width="11.5" height="11.5" viewBox="0 0 12 12"><defs><linearGradient id="fg" x1="0" y1="0" x2="0" y2="1"><stop offset="0" stop-color="#f57a20"/><stop offset="1" stop-color="#e52d2d"/></linearGradient></defs><rect width="12" height="12" fill="url(#fg)"/><path d="M6 1.8L7.2 4.6L10.2 4.8L7.9 6.8L8.6 9.8L6 8.2L3.4 9.8L4.1 6.8L1.8 4.8L4.8 4.6Z" fill="#fff"/></svg>
<div class="a tx" style="left:93.67px;top:558.50px;color:#6e7b91">favicon.ico</div>
<svg class="a" style="left:75.97px;top:580.30px" width="11.5" height="11" viewBox="0 0 12 11.5"><rect width="12" height="11.5" fill="#6a3fb5"/><text x="6" y="10" font-family="Liberation Sans" font-weight="bold" font-size="5.5" fill="#fff" text-anchor="middle">css</text></svg>
<div class="a tx" style="left:93.67px;top:576.83px;color:#6e7b91">globals.css</div>
<svg class="a" style="left:75.67px;top:598.33px" width="12.0" height="12.0" viewBox="-12 -12 24 24"><g fill="none" stroke="#2284dc" stroke-width="1.15"><ellipse rx="11.2" ry="4.2"/><ellipse rx="11.2" ry="4.2" transform="rotate(60)"/><ellipse rx="11.2" ry="4.2" transform="rotate(120)"/></g><circle r="2.2" fill="#2284dc"/></svg>
<div class="a tx" style="left:93.67px;top:595.17px;color:#6e7b91">layout.tsx</div>
<svg class="a" style="left:75.67px;top:616.67px" width="12.0" height="12.0" viewBox="-12 -12 24 24"><g fill="none" stroke="#2284dc" stroke-width="1.15"><ellipse rx="11.2" ry="4.2"/><ellipse rx="11.2" ry="4.2" transform="rotate(60)"/><ellipse rx="11.2" ry="4.2" transform="rotate(120)"/></g><circle r="2.2" fill="#2284dc"/></svg>
<div class="a tx" style="left:93.67px;top:613.50px;color:#6e7b91">not-found.tsx</div>
<svg class="a" style="left:54.50px;top:638.80px" width="9" height="6" viewBox="0 0 9 6"><path d="M0.6 1.2L4.5 4.8L8.4 1.2" fill="none" stroke="#5f6b7c" stroke-width="1"/></svg>
<svg class="a" style="left:69.00px;top:636.40px" width="12" height="9.6" viewBox="0 0 12.6 10" preserveAspectRatio="none"><path d="M0.5 2.6H7V0.3Q7 0 7.3 0H12Q12.3 0 12.3 .3V9H0.5Z" fill="#b8925a"/><rect x="8.3" y="1" width="2.8" height="0.9" fill="#0c0f16" opacity="0.85"/><path d="M0 3.8H12.3V9H1.2Z" fill="#e2c084"/><rect x="2.3" y="3.1" width="9.6" height="0.8" fill="#6e5a3a" opacity="0.8"/></svg>
<svg class="a" style="left:71.90px;top:638.60px" width="9" height="9.5" viewBox="0 0 9 9.5"><defs><linearGradient id="cg" x1="0" y1="0" x2="0.3" y2="1"><stop offset="0" stop-color="#ffd21f"/><stop offset="1" stop-color="#f28a1c"/></linearGradient></defs><path d="M4.6 0.3C6 2 8.9 3 8.9 4.8C8.9 6.6 6 7.6 4.6 9.4C3.2 7.6 0.1 6.6 0.1 4.8C0.1 3 3.2 2 4.6 0.3Z" fill="url(#cg)"/></svg>
<div class="a tx" style="left:87.00px;top:631.83px;color:#6e7b91">components</div>
<svg class="a" style="left:63.87px;top:655.63px" width="6" height="9" viewBox="0 0 6 9"><path d="M1.2 0.6L4.8 4.5L1.2 8.4" fill="none" stroke="#5f6b7c" stroke-width="1"/></svg>
<svg class="a" style="left:77.27px;top:654.53px" width="11" height="10" viewBox="0 0 11 10"><path d="M0 2.6H5.5V0.3Q5.5 0 5.8 0H10.2Q10.5 0 10.5 .3V9.2H0Z" fill="#c49a5c"/><rect x="6.8" y="1" width="2.6" height="0.9" fill="#0c0f16" opacity="0.85"/></svg>
<div class="a tx" style="left:93.67px;top:650.17px;color:#6e7b91">auth</div>
<svg class="a" style="left:63.87px;top:673.97px" width="6" height="9" viewBox="0 0 6 9"><path d="M1.2 0.6L4.8 4.5L1.2 8.4" fill="none" stroke="#5f6b7c" stroke-width="1"/></svg>
<svg class="a" style="left:77.27px;top:672.87px" width="11" height="10" viewBox="0 0 11 10"><path d="M0 2.6H5.5V0.3Q5.5 0 5.8 0H10.2Q10.5 0 10.5 .3V9.2H0Z" fill="#c49a5c"/><rect x="6.8" y="1" width="2.6" height="0.9" fill="#0c0f16" opacity="0.85"/></svg>
<div class="a tx" style="left:93.67px;top:668.50px;color:#6e7b91">charts</div>
<svg class="a" style="left:45.50px;top:695.80px" width="6" height="9" viewBox="0 0 6 9"><path d="M1.2 0.6L4.8 4.5L1.2 8.4" fill="none" stroke="#8a94a6" stroke-width="1"/></svg>
<div class="a" style="left:57px;top:695.40px;font-weight:bold;font-size:10.2px;letter-spacing:-0.8px;color:#7f8a9c;line-height:12px">TIMELINE</div>
<svg class="a" style="left:278.60px;top:43.80px" width="12.0" height="12.0" viewBox="-12 -12 24 24"><g fill="none" stroke="#2284dc" stroke-width="1.15"><ellipse rx="11.2" ry="4.2"/><ellipse rx="11.2" ry="4.2" transform="rotate(60)"/><ellipse rx="11.2" ry="4.2" transform="rotate(120)"/></g><circle r="2.2" fill="#2284dc"/></svg>
<div class="a tab" style="left:297.2px">footer.tsx</div>
<svg class="a" style="left:378.30px;top:43.80px" width="12.0" height="12.0" viewBox="-12 -12 24 24"><g fill="none" stroke="#2284dc" stroke-width="1.15"><ellipse rx="11.2" ry="4.2"/><ellipse rx="11.2" ry="4.2" transform="rotate(60)"/><ellipse rx="11.2" ry="4.2" transform="rotate(120)"/></g><circle r="2.2" fill="#2284dc"/></svg>
<div class="a tab" style="left:396.7px">page.tsx</div>
<div class="a tab" style="left:441.4px;font-size:9.9px;color:#5d6676;top:43.8px">...\form-validation</div>
<svg class="a" style="left:551.40px;top:43.80px" width="12.0" height="12.0" viewBox="-12 -12 24 24"><g fill="none" stroke="#2284dc" stroke-width="1.15"><ellipse rx="11.2" ry="4.2"/><ellipse rx="11.2" ry="4.2" transform="rotate(60)"/><ellipse rx="11.2" ry="4.2" transform="rotate(120)"/></g><circle r="2.2" fill="#2284dc"/></svg>
<div class="a tab" style="left:569.4px">validate-form.tsx</div>
<svg class="a" style="left:682.40px;top:43.80px" width="12.0" height="12.0" viewBox="-12 -12 24 24"><g fill="none" stroke="#2284dc" stroke-width="1.15"><ellipse rx="11.2" ry="4.2"/><ellipse rx="11.2" ry="4.2" transform="rotate(60)"/><ellipse rx="11.2" ry="4.2" transform="rotate(120)"/></g><circle r="2.2" fill="#2284dc"/></svg>
<div class="a tab" style="left:700px;font-style:italic;font-size:10.4px;top:43.5px;color:#d5d9df">page.tsx</div>
<div class="a tab" style="left:742.8px;font-style:italic;font-size:9.5px;letter-spacing:0.15px;color:#8a919c;top:44.2px">...\column-chart</div>
<svg class="a" style="left:819.5px;top:46.2px" width="8" height="8" viewBox="0 0 8 8"><path d="M0.4 0.4L7.6 7.6M7.6 0.4L0.4 7.6" stroke="#cfd3d9" stroke-width="1.1"/></svg>
<div class="a" style="left:673.7px;top:62.6px;width:161px;height:1.6px;background:#e8ab3c"></div>
<svg class="a" style="left:1320px;top:43.6px" width="11" height="11" viewBox="0 0 11 11"><rect x="0.5" y="0.5" width="10" height="10" rx="1" fill="none" stroke="#4b5566" stroke-width="1"/><path d="M5.5 0.5V10.5" stroke="#4b5566" stroke-width="1"/></svg>
<div class="a" style="left:1341.50px;top:49px;width:1.6px;height:1.6px;border-radius:50%;background:#4b5566"></div>
<div class="a" style="left:1345.70px;top:49px;width:1.6px;height:1.6px;border-radius:50%;background:#4b5566"></div>
<div class="a" style="left:1349.90px;top:49px;width:1.6px;height:1.6px;border-radius:50%;background:#4b5566"></div>
<div class="a crumb" style="left:283.5px;color:#616b7c">app</div>
<div class="a crumb" style="left:314.9px;color:#616b7c">(dashboard)</div>
<div class="a crumb" style="left:385.7px;color:#616b7c">(charts)</div>
<div class="a crumb" style="left:434.6px;color:#616b7c">column-chart</div>
<div class="a crumb" style="left:530px;color:#616b7c">page.tsx</div>
<div class="a crumb" style="left:582px;color:#616b7c">...</div>
<svg class="a" style="left:306.4px;top:69.5px" width="5" height="8" viewBox="0 0 5 8"><path d="M0.5 0.5L4 4L0.5 7.5" fill="none" stroke="#525b6b" stroke-width="0.9"/></svg>
<svg class="a" style="left:377.8px;top:69.5px" width="5" height="8" viewBox="0 0 5 8"><path d="M0.5 0.5L4 4L0.5 7.5" fill="none" stroke="#525b6b" stroke-width="0.9"/></svg>
<svg class="a" style="left:426.1px;top:69.5px" width="5" height="8" viewBox="0 0 5 8"><path d="M0.5 0.5L4 4L0.5 7.5" fill="none" stroke="#525b6b" stroke-width="0.9"/></svg>
<svg class="a" style="left:503.5px;top:69.5px" width="5" height="8" viewBox="0 0 5 8"><path d="M0.5 0.5L4 4L0.5 7.5" fill="none" stroke="#525b6b" stroke-width="0.9"/></svg>
<svg class="a" style="left:574.8px;top:69.5px" width="5" height="8" viewBox="0 0 5 8"><path d="M0.5 0.5L4 4L0.5 7.5" fill="none" stroke="#525b6b" stroke-width="0.9"/></svg>
<svg class="a" style="left:513.70px;top:67.80px" width="11" height="11" viewBox="-12 -12 24 24"><g fill="none" stroke="#2284dc" stroke-width="1.15"><ellipse rx="11.2" ry="4.2"/><ellipse rx="11.2" ry="4.2" transform="rotate(60)"/><ellipse rx="11.2" ry="4.2" transform="rotate(120)"/></g><circle r="2.2" fill="#2284dc"/></svg>
<div class="a" style="left:327.00px;top:82.20px;width:907.60px;height:15.83px;background:#141821"></div>
<div class="a" style="left:270px;top:81px;width:1085px;height:1.1px;background:#090b10"></div>
<div class="a" style="left:327.00px;top:224.70px;width:1px;height:316.67px;background:#1f242d"></div>
<div class="a" style="left:352.67px;top:240.53px;width:1px;height:285.00px;background:#1f242d"></div>
<div class="a" style="left:378.33px;top:256.37px;width:1px;height:253.33px;background:#1f242d"></div>
<div class="a" style="left:404.00px;top:303.87px;width:1px;height:190.00px;background:#1f242d"></div>
<div class="a" style="left:429.67px;top:319.70px;width:1px;height:15.83px;background:#1f242d"></div>
<div class="a" style="left:429.67px;top:367.20px;width:1px;height:15.83px;background:#1f242d"></div>
<div class="a" style="left:429.67px;top:414.70px;width:1px;height:15.83px;background:#1f242d"></div>
<div class="a" style="left:429.67px;top:462.20px;width:1px;height:15.83px;background:#1f242d"></div>
<div class="a ln">1
2
3
4
5
6
7
8
9
10
11
12
13
14
15
16
17
18
19
20
21
22
23
24
25
26
27
28
29
30
31
32</div>
<div class="a code"><span style="color:#f5873a">import</span> <span style="color:#d8dce2">React</span> <span style="color:#f5873a">from</span> <span style="color:#a6d24a">&quot;react&quot;</span><span style="color:#8899ac">;</span>
<span style="color:#f5873a">import</span> <span style="color:#d8dce2">DashboardBreadcrumb</span> <span style="color:#f5873a">from</span> <span style="color:#a6d24a">&quot;@/components/layout/dashboard-breadcrumb&quot;</span><span style="color:#8899ac">;</span>
<span style="color:#f5873a">import</span> <span style="color:#d8dce2">DefaultCardComponent</span> <span style="color:#f5873a">from</span> <span style="color:#a6d24a">&quot;../../components/default-card-component&quot;</span><span style="color:#8899ac">;</span>
<span style="color:#f5873a">import</span> <span style="color:#d8dce2">GenerateContentChart</span> <span style="color:#f5873a">from</span> <span style="color:#a6d24a">&quot;@/components/charts/generate-content-chart&quot;</span><span style="color:#8899ac">;</span>
<span style="color:#f5873a">import</span> <span style="color:#d8dce2">RevenueStatisticsChartUpdown</span> <span style="color:#f5873a">from</span> <span style="color:#a6d24a">&quot;@/components/charts/revenue-statistics-chart-updown&quot;</span><span style="color:#8899ac">;</span>
<span style="color:#f5873a">import</span> <span style="color:#d8dce2">ColumnGroupBarChart</span> <span style="color:#f5873a">from</span> <span style="color:#a6d24a">&quot;@/components/charts/column-group-bar-chart&quot;</span><span style="color:#8899ac">;</span>
<span style="color:#f5873a">import</span> <span style="color:#d8dce2">GroupColumnChart</span> <span style="color:#f5873a">from</span> <span style="color:#a6d24a">&quot;@/components/charts/group-column-chart&quot;</span><span style="color:#8899ac">;</span>

<span style="color:#f5873a">const</span> <span style="color:#f4b06c">ColumnChartPage</span> <span style="color:#f5873a">=</span> <span style="color:#ffd43b">()</span> <span style="color:#f5873a">=&gt;</span> <span style="color:#ffd43b">{</span>
    <span style="color:#f5873a">return</span> <span style="color:#d86bd2">(</span>
        <span style="color:#55869c">&lt;&gt;</span>
            <span style="color:#55869c">&lt;</span><span style="color:#4eb8f4">DashboardBreadcrumb</span> <span style="color:#f0a04b">title</span><span style="color:#f5873a">=</span><span style="color:#a6d24a">&quot;Column Chart&quot;</span> <span style="color:#f0a04b">text</span><span style="color:#f5873a">=</span><span style="color:#a6d24a">&quot;Column Chart&quot;</span> <span style="color:#55869c">/&gt;</span>

            <span style="color:#55869c">&lt;</span><span style="color:#4eb8f4">div</span> <span style="color:#f0a04b">className</span><span style="color:#f5873a">=</span><span style="color:#a6d24a">&quot;grid grid-cols-1 md:grid-cols-2 gap-6&quot;</span><span style="color:#55869c">&gt;</span>
                <span style="color:#55869c">&lt;</span><span style="color:#4eb8f4">DefaultCardComponent</span> <span style="color:#f0a04b">title</span><span style="color:#f5873a">=</span><span style="color:#a6d24a">&quot;Column Charts&quot;</span><span style="color:#55869c">&gt;</span>
                    <span style="color:#55869c">&lt;</span><span style="color:#4eb8f4">GenerateContentChart</span> <span style="color:#55869c">/&gt;</span>
                <span style="color:#55869c">&lt;/</span><span style="color:#4eb8f4">DefaultCardComponent</span><span style="color:#55869c">&gt;</span>
                <span style="color:#55869c">&lt;</span><span style="color:#4eb8f4">DefaultCardComponent</span> <span style="color:#f0a04b">title</span><span style="color:#f5873a">=</span><span style="color:#a6d24a">&quot;Column Charts&quot;</span><span style="color:#55869c">&gt;</span>
                    <span style="color:#55869c">&lt;</span><span style="color:#4eb8f4">ColumnGroupBarChart</span> <span style="color:#55869c">/&gt;</span>
                <span style="color:#55869c">&lt;/</span><span style="color:#4eb8f4">DefaultCardComponent</span><span style="color:#55869c">&gt;</span>
                <span style="color:#55869c">&lt;</span><span style="color:#4eb8f4">DefaultCardComponent</span> <span style="color:#f0a04b">title</span><span style="color:#f5873a">=</span><span style="color:#a6d24a">&quot;Group Columns&quot;</span><span style="color:#55869c">&gt;</span>
                    <span style="color:#55869c">&lt;</span><span style="color:#4eb8f4">GroupColumnChart</span> <span style="color:#55869c">/&gt;</span>
                <span style="color:#55869c">&lt;/</span><span style="color:#4eb8f4">DefaultCardComponent</span><span style="color:#55869c">&gt;</span>
                <span style="color:#55869c">&lt;</span><span style="color:#4eb8f4">DefaultCardComponent</span> <span style="color:#f0a04b">title</span><span style="color:#f5873a">=</span><span style="color:#a6d24a">&quot;Simple Column&quot;</span><span style="color:#55869c">&gt;</span>
                    <span style="color:#55869c">&lt;</span><span style="color:#4eb8f4">RevenueStatisticsChartUpdown</span> <span style="color:#55869c">/&gt;</span>
                <span style="color:#55869c">&lt;/</span><span style="color:#4eb8f4">DefaultCardComponent</span><span style="color:#55869c">&gt;</span>
            <span style="color:#55869c">&lt;/</span><span style="color:#4eb8f4">div</span><span style="color:#55869c">&gt;</span>
        <span style="color:#55869c">&lt;/&gt;</span>
    <span style="color:#d86bd2">)</span><span style="color:#8899ac">;</span>
<span style="color:#ffd43b">}</span><span style="color:#8899ac">;</span>
<span style="color:#f5873a">export</span> <span style="color:#f5873a">default</span> <span style="color:#f4b06c">ColumnChartPage</span><span style="color:#8899ac">;</span>
</div>
<div class="a" style="left:1234.6px;top:82.2px;width:120px;height:78px;background:#0f1319"></div>
<svg class="a" style="left:1241.8px;top:82.0px;opacity:0.95" width="120" height="70"><path fill="#f5873a" d="M0.1 0.3h0.8v1.0h-0.8zM1.1 0.3h0.8v1.0h-0.8zM2.1 0.3h0.8v1.0h-0.8zM3.1 0.3h0.8v1.0h-0.8zM4.1 0.3h0.8v1.0h-0.8zM5.1 0.0h0.8v1.3h-0.8zM13.1 0.0h0.8v1.3h-0.8zM14.1 0.3h0.8v1.0h-0.8zM15.1 0.3h0.8v1.0h-0.8zM16.1 0.3h0.8v1.0h-0.8zM0.1 2.3h0.8v1.0h-0.8zM1.1 2.3h0.8v1.0h-0.8zM2.1 2.3h0.8v1.0h-0.8zM3.1 2.3h0.8v1.0h-0.8zM4.1 2.3h0.8v1.0h-0.8zM5.1 2.0h0.8v1.3h-0.8zM27.1 2.0h0.8v1.3h-0.8zM28.1 2.3h0.8v1.0h-0.8zM29.1 2.3h0.8v1.0h-0.8zM30.1 2.3h0.8v1.0h-0.8zM0.1 4.3h0.8v1.0h-0.8zM1.1 4.3h0.8v1.0h-0.8zM2.1 4.3h0.8v1.0h-0.8zM3.1 4.3h0.8v1.0h-0.8zM4.1 4.3h0.8v1.0h-0.8zM5.1 4.0h0.8v1.3h-0.8zM28.1 4.0h0.8v1.3h-0.8zM29.1 4.3h0.8v1.0h-0.8zM30.1 4.3h0.8v1.0h-0.8zM31.1 4.3h0.8v1.0h-0.8zM0.1 6.3h0.8v1.0h-0.8zM1.1 6.3h0.8v1.0h-0.8zM2.1 6.3h0.8v1.0h-0.8zM3.1 6.3h0.8v1.0h-0.8zM4.1 6.3h0.8v1.0h-0.8zM5.1 6.0h0.8v1.3h-0.8zM28.1 6.0h0.8v1.3h-0.8zM29.1 6.3h0.8v1.0h-0.8zM30.1 6.3h0.8v1.0h-0.8zM31.1 6.3h0.8v1.0h-0.8zM0.1 8.3h0.8v1.0h-0.8zM1.1 8.3h0.8v1.0h-0.8zM2.1 8.3h0.8v1.0h-0.8zM3.1 8.3h0.8v1.0h-0.8zM4.1 8.3h0.8v1.0h-0.8zM5.1 8.0h0.8v1.3h-0.8zM36.1 8.0h0.8v1.3h-0.8zM37.1 8.3h0.8v1.0h-0.8zM38.1 8.3h0.8v1.0h-0.8zM39.1 8.3h0.8v1.0h-0.8zM0.1 10.3h0.8v1.0h-0.8zM1.1 10.3h0.8v1.0h-0.8zM2.1 10.3h0.8v1.0h-0.8zM3.1 10.3h0.8v1.0h-0.8zM4.1 10.3h0.8v1.0h-0.8zM5.1 10.0h0.8v1.3h-0.8zM27.1 10.0h0.8v1.3h-0.8zM28.1 10.3h0.8v1.0h-0.8zM29.1 10.3h0.8v1.0h-0.8zM30.1 10.3h0.8v1.0h-0.8zM0.1 12.3h0.8v1.0h-0.8zM1.1 12.3h0.8v1.0h-0.8zM2.1 12.3h0.8v1.0h-0.8zM3.1 12.3h0.8v1.0h-0.8zM4.1 12.3h0.8v1.0h-0.8zM5.1 12.0h0.8v1.3h-0.8zM24.1 12.0h0.8v1.3h-0.8zM25.1 12.3h0.8v1.0h-0.8zM26.1 12.3h0.8v1.0h-0.8zM27.1 12.3h0.8v1.0h-0.8zM0.1 16.3h0.8v1.0h-0.8zM1.1 16.3h0.8v1.0h-0.8zM2.1 16.3h0.8v1.0h-0.8zM3.1 16.3h0.8v1.0h-0.8zM4.1 16.0h0.8v1.3h-0.8zM22.1 16.3h0.8v1.0h-0.8zM27.1 16.3h0.8v1.0h-0.8zM28.1 16.3h0.8v1.0h-0.8zM4.1 18.3h0.8v1.0h-0.8zM5.1 18.3h0.8v1.0h-0.8zM6.1 18.0h0.8v1.3h-0.8zM7.1 18.3h0.8v1.0h-0.8zM8.1 18.3h0.8v1.0h-0.8zM9.1 18.3h0.8v1.0h-0.8zM38.1 22.3h0.8v1.0h-0.8zM58.1 22.3h0.8v1.0h-0.8zM26.1 26.3h0.8v1.0h-0.8zM43.1 28.3h0.8v1.0h-0.8zM43.1 34.3h0.8v1.0h-0.8zM43.1 40.3h0.8v1.0h-0.8zM43.1 46.3h0.8v1.0h-0.8zM0.1 60.3h0.8v1.0h-0.8zM1.1 60.3h0.8v1.0h-0.8zM2.1 60.3h0.8v1.0h-0.8zM3.1 60.3h0.8v1.0h-0.8zM4.1 60.3h0.8v1.0h-0.8zM5.1 60.0h0.8v1.3h-0.8zM7.1 60.0h0.8v1.3h-0.8zM8.1 60.3h0.8v1.0h-0.8zM9.1 60.0h0.8v1.3h-0.8zM10.1 60.3h0.8v1.0h-0.8zM11.1 60.3h0.8v1.0h-0.8zM12.1 60.0h0.8v1.3h-0.8zM13.1 60.0h0.8v1.3h-0.8z"/><path fill="#d8dce2" d="M7.1 0.0h0.8v1.3h-0.8zM8.1 0.3h0.8v1.0h-0.8zM9.1 0.3h0.8v1.0h-0.8zM10.1 0.3h0.8v1.0h-0.8zM11.1 0.0h0.8v1.3h-0.8zM7.1 2.0h0.8v1.3h-0.8zM8.1 2.3h0.8v1.0h-0.8zM9.1 2.3h0.8v1.0h-0.8zM10.1 2.0h0.8v1.3h-0.8zM11.1 2.0h0.8v1.3h-0.8zM12.1 2.3h0.8v1.0h-0.8zM13.1 2.3h0.8v1.0h-0.8zM14.1 2.3h0.8v1.0h-0.8zM15.1 2.0h0.8v1.3h-0.8zM16.1 2.0h0.8v1.3h-0.8zM17.1 2.3h0.8v1.0h-0.8zM18.1 2.3h0.8v1.0h-0.8zM19.1 2.3h0.8v1.0h-0.8zM20.1 2.0h0.8v1.3h-0.8zM21.1 2.3h0.8v1.0h-0.8zM22.1 2.3h0.8v1.0h-0.8zM23.1 2.3h0.8v1.0h-0.8zM24.1 2.3h0.8v1.0h-0.8zM25.1 2.0h0.8v1.3h-0.8zM7.1 4.0h0.8v1.3h-0.8zM8.1 4.3h0.8v1.0h-0.8zM9.1 4.0h0.8v1.3h-0.8zM10.1 4.3h0.8v1.0h-0.8zM11.1 4.3h0.8v1.0h-0.8zM12.1 4.0h0.8v1.3h-0.8zM13.1 4.0h0.8v1.3h-0.8zM14.1 4.0h0.8v1.3h-0.8zM15.1 4.3h0.8v1.0h-0.8zM16.1 4.3h0.8v1.0h-0.8zM17.1 4.0h0.8v1.3h-0.8zM18.1 4.0h0.8v1.3h-0.8zM19.1 4.3h0.8v1.0h-0.8zM20.1 4.3h0.8v1.0h-0.8zM21.1 4.3h0.8v1.0h-0.8zM22.1 4.3h0.8v1.0h-0.8zM23.1 4.3h0.8v1.0h-0.8zM24.1 4.3h0.8v1.0h-0.8zM25.1 4.3h0.8v1.0h-0.8zM26.1 4.0h0.8v1.3h-0.8zM7.1 6.0h0.8v1.3h-0.8zM8.1 6.3h0.8v1.0h-0.8zM9.1 6.3h0.8v1.0h-0.8zM10.1 6.3h0.8v1.0h-0.8zM11.1 6.3h0.8v1.0h-0.8zM12.1 6.3h0.8v1.0h-0.8zM13.1 6.0h0.8v1.3h-0.8zM14.1 6.3h0.8v1.0h-0.8zM15.1 6.0h0.8v1.3h-0.8zM16.1 6.3h0.8v1.0h-0.8zM17.1 6.3h0.8v1.0h-0.8zM18.1 6.0h0.8v1.3h-0.8zM19.1 6.3h0.8v1.0h-0.8zM20.1 6.3h0.8v1.0h-0.8zM21.1 6.0h0.8v1.3h-0.8zM22.1 6.0h0.8v1.3h-0.8zM23.1 6.0h0.8v1.3h-0.8zM24.1 6.3h0.8v1.0h-0.8zM25.1 6.3h0.8v1.0h-0.8zM26.1 6.0h0.8v1.3h-0.8zM7.1 8.0h0.8v1.3h-0.8zM8.1 8.3h0.8v1.0h-0.8zM9.1 8.3h0.8v1.0h-0.8zM10.1 8.3h0.8v1.0h-0.8zM11.1 8.3h0.8v1.0h-0.8zM12.1 8.3h0.8v1.0h-0.8zM13.1 8.3h0.8v1.0h-0.8zM14.1 8.0h0.8v1.3h-0.8zM15.1 8.0h0.8v1.3h-0.8zM16.1 8.3h0.8v1.0h-0.8zM17.1 8.0h0.8v1.3h-0.8zM18.1 8.3h0.8v1.0h-0.8zM19.1 8.3h0.8v1.0h-0.8zM20.1 8.0h0.8v1.3h-0.8zM21.1 8.3h0.8v1.0h-0.8zM22.1 8.3h0.8v1.0h-0.8zM23.1 8.3h0.8v1.0h-0.8zM24.1 8.0h0.8v1.3h-0.8zM25.1 8.0h0.8v1.3h-0.8zM26.1 8.3h0.8v1.0h-0.8zM27.1 8.3h0.8v1.0h-0.8zM28.1 8.0h0.8v1.3h-0.8zM29.1 8.0h0.8v1.3h-0.8zM30.1 8.3h0.8v1.0h-0.8zM31.1 8.0h0.8v1.3h-0.8zM32.1 8.3h0.8v1.0h-0.8zM33.1 8.3h0.8v1.0h-0.8zM34.1 8.3h0.8v1.0h-0.8zM7.1 10.0h0.8v1.3h-0.8zM8.1 10.3h0.8v1.0h-0.8zM9.1 10.0h0.8v1.3h-0.8zM10.1 10.3h0.8v1.0h-0.8zM11.1 10.3h0.8v1.0h-0.8zM12.1 10.3h0.8v1.0h-0.8zM13.1 10.0h0.8v1.3h-0.8zM14.1 10.3h0.8v1.0h-0.8zM15.1 10.3h0.8v1.0h-0.8zM16.1 10.3h0.8v1.0h-0.8zM17.1 10.3h0.8v1.0h-0.8zM18.1 10.0h0.8v1.3h-0.8zM19.1 10.3h0.8v1.0h-0.8zM20.1 10.3h0.8v1.0h-0.8zM21.1 10.0h0.8v1.3h-0.8zM22.1 10.0h0.8v1.3h-0.8zM23.1 10.3h0.8v1.0h-0.8zM24.1 10.3h0.8v1.0h-0.8zM25.1 10.0h0.8v1.3h-0.8zM7.1 12.0h0.8v1.3h-0.8zM8.1 12.3h0.8v1.0h-0.8zM9.1 12.3h0.8v1.0h-0.8zM10.1 12.3h0.8v1.0h-0.8zM11.1 12.3h0.8v1.0h-0.8zM12.1 12.0h0.8v1.3h-0.8zM13.1 12.3h0.8v1.0h-0.8zM14.1 12.0h0.8v1.3h-0.8zM15.1 12.3h0.8v1.0h-0.8zM16.1 12.3h0.8v1.0h-0.8zM17.1 12.3h0.8v1.0h-0.8zM18.1 12.0h0.8v1.3h-0.8zM19.1 12.0h0.8v1.3h-0.8zM20.1 12.3h0.8v1.0h-0.8zM21.1 12.3h0.8v1.0h-0.8zM22.1 12.0h0.8v1.3h-0.8z"/><path fill="#a6d24a" d="M18.1 0.0h0.8v1.3h-0.8zM19.1 0.3h0.8v1.0h-0.8zM20.1 0.3h0.8v1.0h-0.8zM21.1 0.3h0.8v1.0h-0.8zM22.1 0.3h0.8v1.0h-0.8zM23.1 0.0h0.8v1.3h-0.8zM24.1 0.0h0.8v1.3h-0.8zM32.1 2.0h0.8v1.3h-0.8zM33.1 2.0h0.8v1.3h-0.8zM34.1 2.0h0.8v1.3h-0.8zM35.1 2.3h0.8v1.0h-0.8zM36.1 2.3h0.8v1.0h-0.8zM37.1 2.3h0.8v1.0h-0.8zM38.1 2.3h0.8v1.0h-0.8zM39.1 2.3h0.8v1.0h-0.8zM40.1 2.3h0.8v1.0h-0.8zM41.1 2.3h0.8v1.0h-0.8zM42.1 2.3h0.8v1.0h-0.8zM43.1 2.0h0.8v1.3h-0.8zM44.1 2.3h0.8v1.0h-0.8zM45.1 2.0h0.8v1.3h-0.8zM46.1 2.0h0.8v1.3h-0.8zM47.1 2.3h0.8v1.0h-0.8zM48.1 2.3h0.8v1.0h-0.8zM49.1 2.3h0.8v1.0h-0.8zM50.1 2.3h0.8v1.0h-0.8zM51.1 2.0h0.8v1.3h-0.8zM52.1 2.0h0.8v1.3h-0.8zM53.1 2.0h0.8v1.3h-0.8zM54.1 2.3h0.8v1.0h-0.8zM55.1 2.3h0.8v1.0h-0.8zM56.1 2.0h0.8v1.3h-0.8zM57.1 2.0h0.8v1.3h-0.8zM58.1 2.3h0.8v1.0h-0.8zM59.1 2.3h0.8v1.0h-0.8zM60.1 2.3h0.8v1.0h-0.8zM61.1 2.0h0.8v1.3h-0.8zM62.1 2.3h0.8v1.0h-0.8zM63.1 2.0h0.8v1.3h-0.8zM64.1 2.3h0.8v1.0h-0.8zM65.1 2.3h0.8v1.0h-0.8zM66.1 2.3h0.8v1.0h-0.8zM67.1 2.0h0.8v1.3h-0.8zM68.1 2.3h0.8v1.0h-0.8zM69.1 2.3h0.8v1.0h-0.8zM70.1 2.3h0.8v1.0h-0.8zM71.1 2.3h0.8v1.0h-0.8zM72.1 2.0h0.8v1.3h-0.8zM73.1 2.0h0.8v1.3h-0.8zM33.1 4.0h0.8v1.3h-0.8zM34.1 4.3h0.8v1.0h-0.8zM35.1 4.3h0.8v1.0h-0.8zM36.1 4.0h0.8v1.3h-0.8zM37.1 4.3h0.8v1.0h-0.8zM38.1 4.3h0.8v1.0h-0.8zM39.1 4.0h0.8v1.3h-0.8zM40.1 4.3h0.8v1.0h-0.8zM41.1 4.3h0.8v1.0h-0.8zM42.1 4.3h0.8v1.0h-0.8zM43.1 4.3h0.8v1.0h-0.8zM44.1 4.3h0.8v1.0h-0.8zM45.1 4.3h0.8v1.0h-0.8zM46.1 4.3h0.8v1.0h-0.8zM47.1 4.3h0.8v1.0h-0.8zM48.1 4.0h0.8v1.3h-0.8zM49.1 4.3h0.8v1.0h-0.8zM50.1 4.0h0.8v1.3h-0.8zM51.1 4.0h0.8v1.3h-0.8zM52.1 4.3h0.8v1.0h-0.8zM53.1 4.0h0.8v1.3h-0.8zM54.1 4.3h0.8v1.0h-0.8zM55.1 4.3h0.8v1.0h-0.8zM56.1 4.0h0.8v1.3h-0.8zM57.1 4.0h0.8v1.3h-0.8zM58.1 4.3h0.8v1.0h-0.8zM59.1 4.3h0.8v1.0h-0.8zM60.1 4.3h0.8v1.0h-0.8zM61.1 4.3h0.8v1.0h-0.8zM62.1 4.0h0.8v1.3h-0.8zM63.1 4.3h0.8v1.0h-0.8zM64.1 4.3h0.8v1.0h-0.8zM65.1 4.3h0.8v1.0h-0.8zM66.1 4.3h0.8v1.0h-0.8zM67.1 4.3h0.8v1.0h-0.8zM68.1 4.3h0.8v1.0h-0.8zM69.1 4.3h0.8v1.0h-0.8zM70.1 4.3h0.8v1.0h-0.8zM71.1 4.3h0.8v1.0h-0.8zM72.1 4.0h0.8v1.3h-0.8zM73.1 4.0h0.8v1.3h-0.8zM33.1 6.0h0.8v1.3h-0.8zM34.1 6.0h0.8v1.3h-0.8zM35.1 6.0h0.8v1.3h-0.8zM36.1 6.3h0.8v1.0h-0.8zM37.1 6.3h0.8v1.0h-0.8zM38.1 6.3h0.8v1.0h-0.8zM39.1 6.3h0.8v1.0h-0.8zM40.1 6.3h0.8v1.0h-0.8zM41.1 6.3h0.8v1.0h-0.8zM42.1 6.3h0.8v1.0h-0.8zM43.1 6.3h0.8v1.0h-0.8zM44.1 6.0h0.8v1.3h-0.8zM45.1 6.3h0.8v1.0h-0.8zM46.1 6.0h0.8v1.3h-0.8zM47.1 6.3h0.8v1.0h-0.8zM48.1 6.0h0.8v1.3h-0.8zM49.1 6.3h0.8v1.0h-0.8zM50.1 6.3h0.8v1.0h-0.8zM51.1 6.0h0.8v1.3h-0.8zM52.1 6.3h0.8v1.0h-0.8zM53.1 6.0h0.8v1.3h-0.8zM54.1 6.3h0.8v1.0h-0.8zM55.1 6.3h0.8v1.0h-0.8zM56.1 6.3h0.8v1.0h-0.8zM57.1 6.3h0.8v1.0h-0.8zM58.1 6.3h0.8v1.0h-0.8zM59.1 6.3h0.8v1.0h-0.8zM60.1 6.0h0.8v1.3h-0.8zM61.1 6.3h0.8v1.0h-0.8zM62.1 6.3h0.8v1.0h-0.8zM63.1 6.3h0.8v1.0h-0.8zM64.1 6.3h0.8v1.0h-0.8zM65.1 6.3h0.8v1.0h-0.8zM66.1 6.0h0.8v1.3h-0.8zM67.1 6.3h0.8v1.0h-0.8zM68.1 6.3h0.8v1.0h-0.8zM69.1 6.0h0.8v1.3h-0.8zM70.1 6.3h0.8v1.0h-0.8zM71.1 6.3h0.8v1.0h-0.8zM72.1 6.0h0.8v1.3h-0.8zM73.1 6.3h0.8v1.0h-0.8zM74.1 6.3h0.8v1.0h-0.8zM75.1 6.0h0.8v1.3h-0.8zM76.1 6.0h0.8v1.3h-0.8zM41.1 8.0h0.8v1.3h-0.8zM42.1 8.0h0.8v1.3h-0.8zM43.1 8.0h0.8v1.3h-0.8zM44.1 8.3h0.8v1.0h-0.8zM45.1 8.3h0.8v1.0h-0.8zM46.1 8.3h0.8v1.0h-0.8zM47.1 8.3h0.8v1.0h-0.8zM48.1 8.3h0.8v1.0h-0.8zM49.1 8.3h0.8v1.0h-0.8zM50.1 8.3h0.8v1.0h-0.8zM51.1 8.3h0.8v1.0h-0.8zM52.1 8.0h0.8v1.3h-0.8zM53.1 8.3h0.8v1.0h-0.8zM54.1 8.0h0.8v1.3h-0.8zM55.1 8.3h0.8v1.0h-0.8zM56.1 8.0h0.8v1.3h-0.8zM57.1 8.3h0.8v1.0h-0.8zM58.1 8.3h0.8v1.0h-0.8zM59.1 8.0h0.8v1.3h-0.8zM60.1 8.3h0.8v1.0h-0.8zM61.1 8.0h0.8v1.3h-0.8zM62.1 8.3h0.8v1.0h-0.8zM63.1 8.3h0.8v1.0h-0.8zM64.1 8.3h0.8v1.0h-0.8zM65.1 8.3h0.8v1.0h-0.8zM66.1 8.3h0.8v1.0h-0.8zM67.1 8.3h0.8v1.0h-0.8zM68.1 8.3h0.8v1.0h-0.8zM69.1 8.3h0.8v1.0h-0.8zM70.1 8.3h0.8v1.0h-0.8zM71.1 8.0h0.8v1.3h-0.8zM72.1 8.3h0.8v1.0h-0.8zM73.1 8.0h0.8v1.3h-0.8zM74.1 8.3h0.8v1.0h-0.8zM75.1 8.3h0.8v1.0h-0.8zM76.1 8.0h0.8v1.3h-0.8zM77.1 8.3h0.8v1.0h-0.8zM78.1 8.3h0.8v1.0h-0.8zM79.1 8.3h0.8v1.0h-0.8zM80.1 8.3h0.8v1.0h-0.8zM81.1 8.3h0.8v1.0h-0.8zM82.1 8.0h0.8v1.3h-0.8zM83.1 8.3h0.8v1.0h-0.8zM84.1 8.3h0.8v1.0h-0.8zM85.1 8.0h0.8v1.3h-0.8zM86.1 8.3h0.8v1.0h-0.8zM87.1 8.3h0.8v1.0h-0.8zM88.1 8.3h0.8v1.0h-0.8zM89.1 8.0h0.8v1.3h-0.8zM90.1 8.3h0.8v1.0h-0.8zM91.1 8.3h0.8v1.0h-0.8zM92.1 8.3h0.8v1.0h-0.8zM93.1 8.0h0.8v1.3h-0.8zM32.1 10.0h0.8v1.3h-0.8zM33.1 10.0h0.8v1.3h-0.8zM34.1 10.0h0.8v1.3h-0.8zM35.1 10.3h0.8v1.0h-0.8zM36.1 10.3h0.8v1.0h-0.8zM37.1 10.3h0.8v1.0h-0.8zM38.1 10.3h0.8v1.0h-0.8zM39.1 10.3h0.8v1.0h-0.8zM40.1 10.3h0.8v1.0h-0.8zM41.1 10.3h0.8v1.0h-0.8zM42.1 10.3h0.8v1.0h-0.8zM43.1 10.0h0.8v1.3h-0.8zM44.1 10.3h0.8v1.0h-0.8zM45.1 10.0h0.8v1.3h-0.8zM46.1 10.3h0.8v1.0h-0.8zM47.1 10.0h0.8v1.3h-0.8zM48.1 10.3h0.8v1.0h-0.8zM49.1 10.3h0.8v1.0h-0.8zM50.1 10.0h0.8v1.3h-0.8zM51.1 10.3h0.8v1.0h-0.8zM52.1 10.0h0.8v1.3h-0.8zM53.1 10.3h0.8v1.0h-0.8zM54.1 10.3h0.8v1.0h-0.8zM55.1 10.0h0.8v1.3h-0.8zM56.1 10.3h0.8v1.0h-0.8zM57.1 10.3h0.8v1.0h-0.8zM58.1 10.3h0.8v1.0h-0.8zM59.1 10.3h0.8v1.0h-0.8zM60.1 10.3h0.8v1.0h-0.8zM61.1 10.3h0.8v1.0h-0.8zM62.1 10.3h0.8v1.0h-0.8zM63.1 10.3h0.8v1.0h-0.8zM64.1 10.3h0.8v1.0h-0.8zM65.1 10.3h0.8v1.0h-0.8zM66.1 10.0h0.8v1.3h-0.8zM67.1 10.3h0.8v1.0h-0.8zM68.1 10.3h0.8v1.0h-0.8zM69.1 10.3h0.8v1.0h-0.8zM70.1 10.3h0.8v1.0h-0.8zM71.1 10.0h0.8v1.3h-0.8zM72.1 10.3h0.8v1.0h-0.8zM73.1 10.3h0.8v1.0h-0.8zM74.1 10.0h0.8v1.3h-0.8zM75.1 10.0h0.8v1.3h-0.8zM29.1 12.0h0.8v1.3h-0.8zM30.1 12.0h0.8v1.3h-0.8zM31.1 12.0h0.8v1.3h-0.8zM32.1 12.3h0.8v1.0h-0.8zM33.1 12.3h0.8v1.0h-0.8zM34.1 12.3h0.8v1.0h-0.8zM35.1 12.3h0.8v1.0h-0.8zM36.1 12.3h0.8v1.0h-0.8zM37.1 12.3h0.8v1.0h-0.8zM38.1 12.3h0.8v1.0h-0.8zM39.1 12.3h0.8v1.0h-0.8zM40.1 12.0h0.8v1.3h-0.8zM41.1 12.3h0.8v1.0h-0.8zM42.1 12.0h0.8v1.3h-0.8zM43.1 12.3h0.8v1.0h-0.8zM44.1 12.0h0.8v1.3h-0.8zM45.1 12.3h0.8v1.0h-0.8zM46.1 12.3h0.8v1.0h-0.8zM47.1 12.0h0.8v1.3h-0.8zM48.1 12.3h0.8v1.0h-0.8zM49.1 12.0h0.8v1.3h-0.8zM50.1 12.3h0.8v1.0h-0.8zM51.1 12.3h0.8v1.0h-0.8zM52.1 12.3h0.8v1.0h-0.8zM53.1 12.3h0.8v1.0h-0.8zM54.1 12.3h0.8v1.0h-0.8zM55.1 12.3h0.8v1.0h-0.8zM56.1 12.3h0.8v1.0h-0.8zM57.1 12.3h0.8v1.0h-0.8zM58.1 12.0h0.8v1.3h-0.8zM59.1 12.3h0.8v1.0h-0.8zM60.1 12.3h0.8v1.0h-0.8zM61.1 12.3h0.8v1.0h-0.8zM62.1 12.3h0.8v1.0h-0.8zM63.1 12.3h0.8v1.0h-0.8zM64.1 12.0h0.8v1.3h-0.8zM65.1 12.3h0.8v1.0h-0.8zM66.1 12.3h0.8v1.0h-0.8zM67.1 12.0h0.8v1.3h-0.8zM68.1 12.0h0.8v1.3h-0.8zM39.1 22.0h0.8v1.3h-0.8zM40.1 22.0h0.8v1.3h-0.8zM41.1 22.3h0.8v1.0h-0.8zM42.1 22.0h0.8v1.3h-0.8zM43.1 22.3h0.8v1.0h-0.8zM44.1 22.3h0.8v1.0h-0.8zM45.1 22.3h0.8v1.0h-0.8zM47.1 22.0h0.8v1.3h-0.8zM48.1 22.0h0.8v1.3h-0.8zM49.1 22.3h0.8v1.0h-0.8zM50.1 22.3h0.8v1.0h-0.8zM51.1 22.0h0.8v1.3h-0.8zM52.1 22.0h0.8v1.3h-0.8zM59.1 22.0h0.8v1.3h-0.8zM60.1 22.0h0.8v1.3h-0.8zM61.1 22.3h0.8v1.0h-0.8zM62.1 22.0h0.8v1.3h-0.8zM63.1 22.3h0.8v1.0h-0.8zM64.1 22.3h0.8v1.0h-0.8zM65.1 22.3h0.8v1.0h-0.8zM67.1 22.0h0.8v1.3h-0.8zM68.1 22.0h0.8v1.3h-0.8zM69.1 22.3h0.8v1.0h-0.8zM70.1 22.3h0.8v1.0h-0.8zM71.1 22.0h0.8v1.3h-0.8zM72.1 22.0h0.8v1.3h-0.8zM27.1 26.0h0.8v1.3h-0.8zM28.1 26.3h0.8v1.0h-0.8zM29.1 26.3h0.8v1.0h-0.8zM30.1 26.3h0.8v1.0h-0.8zM31.1 26.0h0.8v1.3h-0.8zM33.1 26.3h0.8v1.0h-0.8zM34.1 26.3h0.8v1.0h-0.8zM35.1 26.3h0.8v1.0h-0.8zM36.1 26.0h0.8v1.3h-0.8zM37.1 26.3h0.8v1.0h-0.8zM38.1 26.3h0.8v1.0h-0.8zM39.1 26.3h0.8v1.0h-0.8zM40.1 26.0h0.8v1.3h-0.8zM41.1 26.3h0.8v1.0h-0.8zM42.1 26.3h0.8v1.0h-0.8zM43.1 26.0h0.8v1.3h-0.8zM45.1 26.3h0.8v1.0h-0.8zM46.1 26.0h0.8v1.3h-0.8zM47.1 26.3h0.8v1.0h-0.8zM48.1 26.3h0.8v1.0h-0.8zM49.1 26.3h0.8v1.0h-0.8zM50.1 26.3h0.8v1.0h-0.8zM51.1 26.0h0.8v1.3h-0.8zM52.1 26.3h0.8v1.0h-0.8zM53.1 26.3h0.8v1.0h-0.8zM54.1 26.3h0.8v1.0h-0.8zM55.1 26.0h0.8v1.3h-0.8zM56.1 26.3h0.8v1.0h-0.8zM57.1 26.3h0.8v1.0h-0.8zM58.1 26.0h0.8v1.3h-0.8zM60.1 26.3h0.8v1.0h-0.8zM61.1 26.3h0.8v1.0h-0.8zM62.1 26.3h0.8v1.0h-0.8zM63.1 26.3h0.8v1.0h-0.8zM64.1 26.0h0.8v1.3h-0.8zM65.1 26.0h0.8v1.3h-0.8zM44.1 28.0h0.8v1.3h-0.8zM45.1 28.0h0.8v1.3h-0.8zM46.1 28.3h0.8v1.0h-0.8zM47.1 28.0h0.8v1.3h-0.8zM48.1 28.3h0.8v1.0h-0.8zM49.1 28.3h0.8v1.0h-0.8zM50.1 28.3h0.8v1.0h-0.8zM52.1 28.0h0.8v1.3h-0.8zM53.1 28.0h0.8v1.3h-0.8zM54.1 28.3h0.8v1.0h-0.8zM55.1 28.3h0.8v1.0h-0.8zM56.1 28.0h0.8v1.3h-0.8zM57.1 28.3h0.8v1.0h-0.8zM58.1 28.0h0.8v1.3h-0.8zM44.1 34.0h0.8v1.3h-0.8zM45.1 34.0h0.8v1.3h-0.8zM46.1 34.3h0.8v1.0h-0.8zM47.1 34.0h0.8v1.3h-0.8zM48.1 34.3h0.8v1.0h-0.8zM49.1 34.3h0.8v1.0h-0.8zM50.1 34.3h0.8v1.0h-0.8zM52.1 34.0h0.8v1.3h-0.8zM53.1 34.0h0.8v1.3h-0.8zM54.1 34.3h0.8v1.0h-0.8zM55.1 34.3h0.8v1.0h-0.8zM56.1 34.0h0.8v1.3h-0.8zM57.1 34.3h0.8v1.0h-0.8zM58.1 34.0h0.8v1.3h-0.8zM44.1 40.0h0.8v1.3h-0.8zM45.1 40.0h0.8v1.3h-0.8zM46.1 40.3h0.8v1.0h-0.8zM47.1 40.3h0.8v1.0h-0.8zM48.1 40.3h0.8v1.0h-0.8zM49.1 40.3h0.8v1.0h-0.8zM51.1 40.0h0.8v1.3h-0.8zM52.1 40.3h0.8v1.0h-0.8zM53.1 40.0h0.8v1.3h-0.8zM54.1 40.3h0.8v1.0h-0.8zM55.1 40.3h0.8v1.0h-0.8zM56.1 40.3h0.8v1.0h-0.8zM57.1 40.3h0.8v1.0h-0.8zM58.1 40.0h0.8v1.3h-0.8zM44.1 46.0h0.8v1.3h-0.8zM45.1 46.0h0.8v1.3h-0.8zM46.1 46.3h0.8v1.0h-0.8zM47.1 46.3h0.8v1.0h-0.8zM48.1 46.3h0.8v1.0h-0.8zM49.1 46.0h0.8v1.3h-0.8zM50.1 46.3h0.8v1.0h-0.8zM52.1 46.0h0.8v1.3h-0.8zM53.1 46.3h0.8v1.0h-0.8zM54.1 46.0h0.8v1.3h-0.8zM55.1 46.3h0.8v1.0h-0.8zM56.1 46.3h0.8v1.0h-0.8zM57.1 46.3h0.8v1.0h-0.8zM58.1 46.0h0.8v1.3h-0.8z"/><path fill="#8899ac" d="M25.1 0.3h0.8v1.0h-0.8zM74.1 2.3h0.8v1.0h-0.8zM74.1 4.3h0.8v1.0h-0.8zM77.1 6.3h0.8v1.0h-0.8zM94.1 8.3h0.8v1.0h-0.8zM76.1 10.3h0.8v1.0h-0.8zM69.1 12.3h0.8v1.0h-0.8zM5.1 56.3h0.8v1.0h-0.8zM1.1 58.3h0.8v1.0h-0.8zM30.1 60.3h0.8v1.0h-0.8z"/><path fill="#f4b06c" d="M6.1 16.0h0.8v1.3h-0.8zM7.1 16.3h0.8v1.0h-0.8zM8.1 16.0h0.8v1.3h-0.8zM9.1 16.3h0.8v1.0h-0.8zM10.1 16.3h0.8v1.0h-0.8zM11.1 16.3h0.8v1.0h-0.8zM12.1 16.0h0.8v1.3h-0.8zM13.1 16.0h0.8v1.3h-0.8zM14.1 16.3h0.8v1.0h-0.8zM15.1 16.3h0.8v1.0h-0.8zM16.1 16.0h0.8v1.3h-0.8zM17.1 16.0h0.8v1.3h-0.8zM18.1 16.3h0.8v1.0h-0.8zM19.1 16.3h0.8v1.0h-0.8zM20.1 16.3h0.8v1.0h-0.8zM15.1 60.0h0.8v1.3h-0.8zM16.1 60.3h0.8v1.0h-0.8zM17.1 60.0h0.8v1.3h-0.8zM18.1 60.3h0.8v1.0h-0.8zM19.1 60.3h0.8v1.0h-0.8zM20.1 60.3h0.8v1.0h-0.8zM21.1 60.0h0.8v1.3h-0.8zM22.1 60.0h0.8v1.3h-0.8zM23.1 60.3h0.8v1.0h-0.8zM24.1 60.3h0.8v1.0h-0.8zM25.1 60.0h0.8v1.3h-0.8zM26.1 60.0h0.8v1.3h-0.8zM27.1 60.3h0.8v1.0h-0.8zM28.1 60.3h0.8v1.0h-0.8zM29.1 60.3h0.8v1.0h-0.8z"/><path fill="#ffd43b" d="M24.1 16.0h0.8v1.3h-0.8zM25.1 16.0h0.8v1.3h-0.8zM30.1 16.0h0.8v1.3h-0.8zM0.1 58.0h0.8v1.3h-0.8z"/><path fill="#d86bd2" d="M11.1 18.0h0.8v1.3h-0.8zM4.1 56.0h0.8v1.3h-0.8z"/><path fill="#55869c" d="M8.1 20.3h0.8v1.0h-0.8zM9.1 20.3h0.8v1.0h-0.8zM12.1 22.3h0.8v1.0h-0.8zM74.1 22.0h0.8v1.3h-0.8zM75.1 22.3h0.8v1.0h-0.8zM12.1 26.3h0.8v1.0h-0.8zM66.1 26.3h0.8v1.0h-0.8zM16.1 28.3h0.8v1.0h-0.8zM59.1 28.3h0.8v1.0h-0.8zM20.1 30.3h0.8v1.0h-0.8zM42.1 30.0h0.8v1.3h-0.8zM43.1 30.3h0.8v1.0h-0.8zM16.1 32.3h0.8v1.0h-0.8zM17.1 32.0h0.8v1.3h-0.8zM38.1 32.3h0.8v1.0h-0.8zM16.1 34.3h0.8v1.0h-0.8zM59.1 34.3h0.8v1.0h-0.8zM20.1 36.3h0.8v1.0h-0.8zM41.1 36.0h0.8v1.3h-0.8zM42.1 36.3h0.8v1.0h-0.8zM16.1 38.3h0.8v1.0h-0.8zM17.1 38.0h0.8v1.3h-0.8zM38.1 38.3h0.8v1.0h-0.8zM16.1 40.3h0.8v1.0h-0.8zM59.1 40.3h0.8v1.0h-0.8zM20.1 42.3h0.8v1.0h-0.8zM38.1 42.0h0.8v1.3h-0.8zM39.1 42.3h0.8v1.0h-0.8zM16.1 44.3h0.8v1.0h-0.8zM17.1 44.0h0.8v1.3h-0.8zM38.1 44.3h0.8v1.0h-0.8zM16.1 46.3h0.8v1.0h-0.8zM59.1 46.3h0.8v1.0h-0.8zM20.1 48.3h0.8v1.0h-0.8zM50.1 48.0h0.8v1.3h-0.8zM51.1 48.3h0.8v1.0h-0.8zM16.1 50.3h0.8v1.0h-0.8zM17.1 50.0h0.8v1.3h-0.8zM38.1 50.3h0.8v1.0h-0.8zM12.1 52.3h0.8v1.0h-0.8zM13.1 52.0h0.8v1.3h-0.8zM17.1 52.3h0.8v1.0h-0.8zM8.1 54.3h0.8v1.0h-0.8zM9.1 54.0h0.8v1.3h-0.8zM10.1 54.3h0.8v1.0h-0.8z"/><path fill="#4eb8f4" d="M13.1 22.0h0.8v1.3h-0.8zM14.1 22.3h0.8v1.0h-0.8zM15.1 22.3h0.8v1.0h-0.8zM16.1 22.0h0.8v1.3h-0.8zM17.1 22.0h0.8v1.3h-0.8zM18.1 22.3h0.8v1.0h-0.8zM19.1 22.3h0.8v1.0h-0.8zM20.1 22.3h0.8v1.0h-0.8zM21.1 22.0h0.8v1.3h-0.8zM22.1 22.0h0.8v1.3h-0.8zM23.1 22.3h0.8v1.0h-0.8zM24.1 22.3h0.8v1.0h-0.8zM25.1 22.3h0.8v1.0h-0.8zM26.1 22.0h0.8v1.3h-0.8zM27.1 22.3h0.8v1.0h-0.8zM28.1 22.3h0.8v1.0h-0.8zM29.1 22.3h0.8v1.0h-0.8zM30.1 22.3h0.8v1.0h-0.8zM31.1 22.0h0.8v1.3h-0.8zM13.1 26.0h0.8v1.3h-0.8zM14.1 26.3h0.8v1.0h-0.8zM15.1 26.3h0.8v1.0h-0.8zM17.1 28.0h0.8v1.3h-0.8zM18.1 28.3h0.8v1.0h-0.8zM19.1 28.0h0.8v1.3h-0.8zM20.1 28.3h0.8v1.0h-0.8zM21.1 28.3h0.8v1.0h-0.8zM22.1 28.0h0.8v1.3h-0.8zM23.1 28.0h0.8v1.3h-0.8zM24.1 28.0h0.8v1.3h-0.8zM25.1 28.3h0.8v1.0h-0.8zM26.1 28.3h0.8v1.0h-0.8zM27.1 28.0h0.8v1.3h-0.8zM28.1 28.0h0.8v1.3h-0.8zM29.1 28.3h0.8v1.0h-0.8zM30.1 28.3h0.8v1.0h-0.8zM31.1 28.3h0.8v1.0h-0.8zM32.1 28.3h0.8v1.0h-0.8zM33.1 28.3h0.8v1.0h-0.8zM34.1 28.3h0.8v1.0h-0.8zM35.1 28.3h0.8v1.0h-0.8zM36.1 28.0h0.8v1.3h-0.8zM21.1 30.0h0.8v1.3h-0.8zM22.1 30.3h0.8v1.0h-0.8zM23.1 30.3h0.8v1.0h-0.8zM24.1 30.3h0.8v1.0h-0.8zM25.1 30.3h0.8v1.0h-0.8zM26.1 30.3h0.8v1.0h-0.8zM27.1 30.0h0.8v1.3h-0.8zM28.1 30.3h0.8v1.0h-0.8zM29.1 30.0h0.8v1.3h-0.8zM30.1 30.3h0.8v1.0h-0.8zM31.1 30.3h0.8v1.0h-0.8zM32.1 30.0h0.8v1.3h-0.8zM33.1 30.3h0.8v1.0h-0.8zM34.1 30.3h0.8v1.0h-0.8zM35.1 30.0h0.8v1.3h-0.8zM36.1 30.0h0.8v1.3h-0.8zM37.1 30.0h0.8v1.3h-0.8zM38.1 30.3h0.8v1.0h-0.8zM39.1 30.3h0.8v1.0h-0.8zM40.1 30.0h0.8v1.3h-0.8zM18.1 32.0h0.8v1.3h-0.8zM19.1 32.3h0.8v1.0h-0.8zM20.1 32.0h0.8v1.3h-0.8zM21.1 32.3h0.8v1.0h-0.8zM22.1 32.3h0.8v1.0h-0.8zM23.1 32.0h0.8v1.3h-0.8zM24.1 32.0h0.8v1.3h-0.8zM25.1 32.0h0.8v1.3h-0.8zM26.1 32.3h0.8v1.0h-0.8zM27.1 32.3h0.8v1.0h-0.8zM28.1 32.0h0.8v1.3h-0.8zM29.1 32.0h0.8v1.3h-0.8zM30.1 32.3h0.8v1.0h-0.8zM31.1 32.3h0.8v1.0h-0.8zM32.1 32.3h0.8v1.0h-0.8zM33.1 32.3h0.8v1.0h-0.8zM34.1 32.3h0.8v1.0h-0.8zM35.1 32.3h0.8v1.0h-0.8zM36.1 32.3h0.8v1.0h-0.8zM37.1 32.0h0.8v1.3h-0.8zM17.1 34.0h0.8v1.3h-0.8zM18.1 34.3h0.8v1.0h-0.8zM19.1 34.0h0.8v1.3h-0.8zM20.1 34.3h0.8v1.0h-0.8zM21.1 34.3h0.8v1.0h-0.8zM22.1 34.0h0.8v1.3h-0.8zM23.1 34.0h0.8v1.3h-0.8zM24.1 34.0h0.8v1.3h-0.8zM25.1 34.3h0.8v1.0h-0.8zM26.1 34.3h0.8v1.0h-0.8zM27.1 34.0h0.8v1.3h-0.8zM28.1 34.0h0.8v1.3h-0.8zM29.1 34.3h0.8v1.0h-0.8zM30.1 34.3h0.8v1.0h-0.8zM31.1 34.3h0.8v1.0h-0.8zM32.1 34.3h0.8v1.0h-0.8zM33.1 34.3h0.8v1.0h-0.8zM34.1 34.3h0.8v1.0h-0.8zM35.1 34.3h0.8v1.0h-0.8zM36.1 34.0h0.8v1.3h-0.8zM21.1 36.0h0.8v1.3h-0.8zM22.1 36.3h0.8v1.0h-0.8zM23.1 36.0h0.8v1.3h-0.8zM24.1 36.3h0.8v1.0h-0.8zM25.1 36.3h0.8v1.0h-0.8zM26.1 36.3h0.8v1.0h-0.8zM27.1 36.0h0.8v1.3h-0.8zM28.1 36.3h0.8v1.0h-0.8zM29.1 36.3h0.8v1.0h-0.8zM30.1 36.3h0.8v1.0h-0.8zM31.1 36.3h0.8v1.0h-0.8zM32.1 36.0h0.8v1.3h-0.8zM33.1 36.3h0.8v1.0h-0.8zM34.1 36.3h0.8v1.0h-0.8zM35.1 36.0h0.8v1.3h-0.8zM36.1 36.0h0.8v1.3h-0.8zM37.1 36.3h0.8v1.0h-0.8zM38.1 36.3h0.8v1.0h-0.8zM39.1 36.0h0.8v1.3h-0.8zM18.1 38.0h0.8v1.3h-0.8zM19.1 38.3h0.8v1.0h-0.8zM20.1 38.0h0.8v1.3h-0.8zM21.1 38.3h0.8v1.0h-0.8zM22.1 38.3h0.8v1.0h-0.8zM23.1 38.0h0.8v1.3h-0.8zM24.1 38.0h0.8v1.3h-0.8zM25.1 38.0h0.8v1.3h-0.8zM26.1 38.3h0.8v1.0h-0.8zM27.1 38.3h0.8v1.0h-0.8zM28.1 38.0h0.8v1.3h-0.8zM29.1 38.0h0.8v1.3h-0.8zM30.1 38.3h0.8v1.0h-0.8zM31.1 38.3h0.8v1.0h-0.8zM32.1 38.3h0.8v1.0h-0.8zM33.1 38.3h0.8v1.0h-0.8zM34.1 38.3h0.8v1.0h-0.8zM35.1 38.3h0.8v1.0h-0.8zM36.1 38.3h0.8v1.0h-0.8zM37.1 38.0h0.8v1.3h-0.8zM17.1 40.0h0.8v1.3h-0.8zM18.1 40.3h0.8v1.0h-0.8zM19.1 40.0h0.8v1.3h-0.8zM20.1 40.3h0.8v1.0h-0.8zM21.1 40.3h0.8v1.0h-0.8zM22.1 40.0h0.8v1.3h-0.8zM23.1 40.0h0.8v1.3h-0.8zM24.1 40.0h0.8v1.3h-0.8zM25.1 40.3h0.8v1.0h-0.8zM26.1 40.3h0.8v1.0h-0.8zM27.1 40.0h0.8v1.3h-0.8zM28.1 40.0h0.8v1.3h-0.8zM29.1 40.3h0.8v1.0h-0.8zM30.1 40.3h0.8v1.0h-0.8zM31.1 40.3h0.8v1.0h-0.8zM32.1 40.3h0.8v1.0h-0.8zM33.1 40.3h0.8v1.0h-0.8zM34.1 40.3h0.8v1.0h-0.8zM35.1 40.3h0.8v1.0h-0.8zM36.1 40.0h0.8v1.3h-0.8zM21.1 42.0h0.8v1.3h-0.8zM22.1 42.3h0.8v1.0h-0.8zM23.1 42.3h0.8v1.0h-0.8zM24.1 42.3h0.8v1.0h-0.8zM25.1 42.3h0.8v1.0h-0.8zM26.1 42.0h0.8v1.3h-0.8zM27.1 42.3h0.8v1.0h-0.8zM28.1 42.0h0.8v1.3h-0.8zM29.1 42.3h0.8v1.0h-0.8zM30.1 42.3h0.8v1.0h-0.8zM31.1 42.3h0.8v1.0h-0.8zM32.1 42.0h0.8v1.3h-0.8zM33.1 42.0h0.8v1.3h-0.8zM34.1 42.3h0.8v1.0h-0.8zM35.1 42.3h0.8v1.0h-0.8zM36.1 42.0h0.8v1.3h-0.8zM18.1 44.0h0.8v1.3h-0.8zM19.1 44.3h0.8v1.0h-0.8zM20.1 44.0h0.8v1.3h-0.8zM21.1 44.3h0.8v1.0h-0.8zM22.1 44.3h0.8v1.0h-0.8zM23.1 44.0h0.8v1.3h-0.8zM24.1 44.0h0.8v1.3h-0.8zM25.1 44.0h0.8v1.3h-0.8zM26.1 44.3h0.8v1.0h-0.8zM27.1 44.3h0.8v1.0h-0.8zM28.1 44.0h0.8v1.3h-0.8zM29.1 44.0h0.8v1.3h-0.8zM30.1 44.3h0.8v1.0h-0.8zM31.1 44.3h0.8v1.0h-0.8zM32.1 44.3h0.8v1.0h-0.8zM33.1 44.3h0.8v1.0h-0.8zM34.1 44.3h0.8v1.0h-0.8zM35.1 44.3h0.8v1.0h-0.8zM36.1 44.3h0.8v1.0h-0.8zM37.1 44.0h0.8v1.3h-0.8zM17.1 46.0h0.8v1.3h-0.8zM18.1 46.3h0.8v1.0h-0.8zM19.1 46.0h0.8v1.3h-0.8zM20.1 46.3h0.8v1.0h-0.8zM21.1 46.3h0.8v1.0h-0.8zM22.1 46.0h0.8v1.3h-0.8zM23.1 46.0h0.8v1.3h-0.8zM24.1 46.0h0.8v1.3h-0.8zM25.1 46.3h0.8v1.0h-0.8zM26.1 46.3h0.8v1.0h-0.8zM27.1 46.0h0.8v1.3h-0.8zM28.1 46.0h0.8v1.3h-0.8zM29.1 46.3h0.8v1.0h-0.8zM30.1 46.3h0.8v1.0h-0.8zM31.1 46.3h0.8v1.0h-0.8zM32.1 46.3h0.8v1.0h-0.8zM33.1 46.3h0.8v1.0h-0.8zM34.1 46.3h0.8v1.0h-0.8zM35.1 46.3h0.8v1.0h-0.8zM36.1 46.0h0.8v1.3h-0.8zM21.1 48.0h0.8v1.3h-0.8zM22.1 48.3h0.8v1.0h-0.8zM23.1 48.3h0.8v1.0h-0.8zM24.1 48.3h0.8v1.0h-0.8zM25.1 48.3h0.8v1.0h-0.8zM26.1 48.3h0.8v1.0h-0.8zM27.1 48.3h0.8v1.0h-0.8zM28.1 48.0h0.8v1.3h-0.8zM29.1 48.0h0.8v1.3h-0.8zM30.1 48.3h0.8v1.0h-0.8zM31.1 48.0h0.8v1.3h-0.8zM32.1 48.3h0.8v1.0h-0.8zM33.1 48.3h0.8v1.0h-0.8zM34.1 48.0h0.8v1.3h-0.8zM35.1 48.3h0.8v1.0h-0.8zM36.1 48.3h0.8v1.0h-0.8zM37.1 48.3h0.8v1.0h-0.8zM38.1 48.0h0.8v1.3h-0.8zM39.1 48.0h0.8v1.3h-0.8zM40.1 48.3h0.8v1.0h-0.8zM41.1 48.3h0.8v1.0h-0.8zM42.1 48.0h0.8v1.3h-0.8zM43.1 48.0h0.8v1.3h-0.8zM44.1 48.3h0.8v1.0h-0.8zM45.1 48.0h0.8v1.3h-0.8zM46.1 48.3h0.8v1.0h-0.8zM47.1 48.3h0.8v1.0h-0.8zM48.1 48.3h0.8v1.0h-0.8zM18.1 50.0h0.8v1.3h-0.8zM19.1 50.3h0.8v1.0h-0.8zM20.1 50.0h0.8v1.3h-0.8zM21.1 50.3h0.8v1.0h-0.8zM22.1 50.3h0.8v1.0h-0.8zM23.1 50.0h0.8v1.3h-0.8zM24.1 50.0h0.8v1.3h-0.8zM25.1 50.0h0.8v1.3h-0.8zM26.1 50.3h0.8v1.0h-0.8zM27.1 50.3h0.8v1.0h-0.8zM28.1 50.0h0.8v1.3h-0.8zM29.1 50.0h0.8v1.3h-0.8zM30.1 50.3h0.8v1.0h-0.8zM31.1 50.3h0.8v1.0h-0.8zM32.1 50.3h0.8v1.0h-0.8zM33.1 50.3h0.8v1.0h-0.8zM34.1 50.3h0.8v1.0h-0.8zM35.1 50.3h0.8v1.0h-0.8zM36.1 50.3h0.8v1.0h-0.8zM37.1 50.0h0.8v1.3h-0.8zM14.1 52.0h0.8v1.3h-0.8zM15.1 52.3h0.8v1.0h-0.8zM16.1 52.3h0.8v1.0h-0.8z"/><path fill="#f0a04b" d="M33.1 22.0h0.8v1.3h-0.8zM34.1 22.3h0.8v1.0h-0.8zM35.1 22.0h0.8v1.3h-0.8zM36.1 22.0h0.8v1.3h-0.8zM37.1 22.3h0.8v1.0h-0.8zM54.1 22.0h0.8v1.3h-0.8zM55.1 22.3h0.8v1.0h-0.8zM56.1 22.3h0.8v1.0h-0.8zM57.1 22.0h0.8v1.3h-0.8zM17.1 26.3h0.8v1.0h-0.8zM18.1 26.0h0.8v1.3h-0.8zM19.1 26.3h0.8v1.0h-0.8zM20.1 26.3h0.8v1.0h-0.8zM21.1 26.3h0.8v1.0h-0.8zM22.1 26.0h0.8v1.3h-0.8zM23.1 26.3h0.8v1.0h-0.8zM24.1 26.3h0.8v1.0h-0.8zM25.1 26.3h0.8v1.0h-0.8zM38.1 28.0h0.8v1.3h-0.8zM39.1 28.3h0.8v1.0h-0.8zM40.1 28.0h0.8v1.3h-0.8zM41.1 28.0h0.8v1.3h-0.8zM42.1 28.3h0.8v1.0h-0.8zM38.1 34.0h0.8v1.3h-0.8zM39.1 34.3h0.8v1.0h-0.8zM40.1 34.0h0.8v1.3h-0.8zM41.1 34.0h0.8v1.3h-0.8zM42.1 34.3h0.8v1.0h-0.8zM38.1 40.0h0.8v1.3h-0.8zM39.1 40.3h0.8v1.0h-0.8zM40.1 40.0h0.8v1.3h-0.8zM41.1 40.0h0.8v1.3h-0.8zM42.1 40.3h0.8v1.0h-0.8zM38.1 46.0h0.8v1.3h-0.8zM39.1 46.3h0.8v1.0h-0.8zM40.1 46.0h0.8v1.3h-0.8zM41.1 46.0h0.8v1.3h-0.8zM42.1 46.3h0.8v1.0h-0.8z"/></svg>
<div class="a" style="left:1354.2px;top:82.2px;width:1px;height:627px;background:#1a1e26"></div>
<div class="a" style="left:1355px;top:81.9px;width:10px;height:1.4px;background:#b08a45"></div>
<div class="a" style="left:309px;top:202px;width:523px;height:383px;border:3px solid #ff0000;border-radius:2px"></div>
<svg class="a" style="left:0;top:0" width="1365" height="709"><path d="M232.6 257.6L193.5 196.5" stroke="#ff0a0a" stroke-width="2.9" stroke-linecap="round"/><path d="M186.3 183.3L198.6 193.6L190.6 199.4Z" fill="#ff0a0a" stroke="#ff0a0a" stroke-width="0.6" stroke-linejoin="round"/></svg>
</body></html>
